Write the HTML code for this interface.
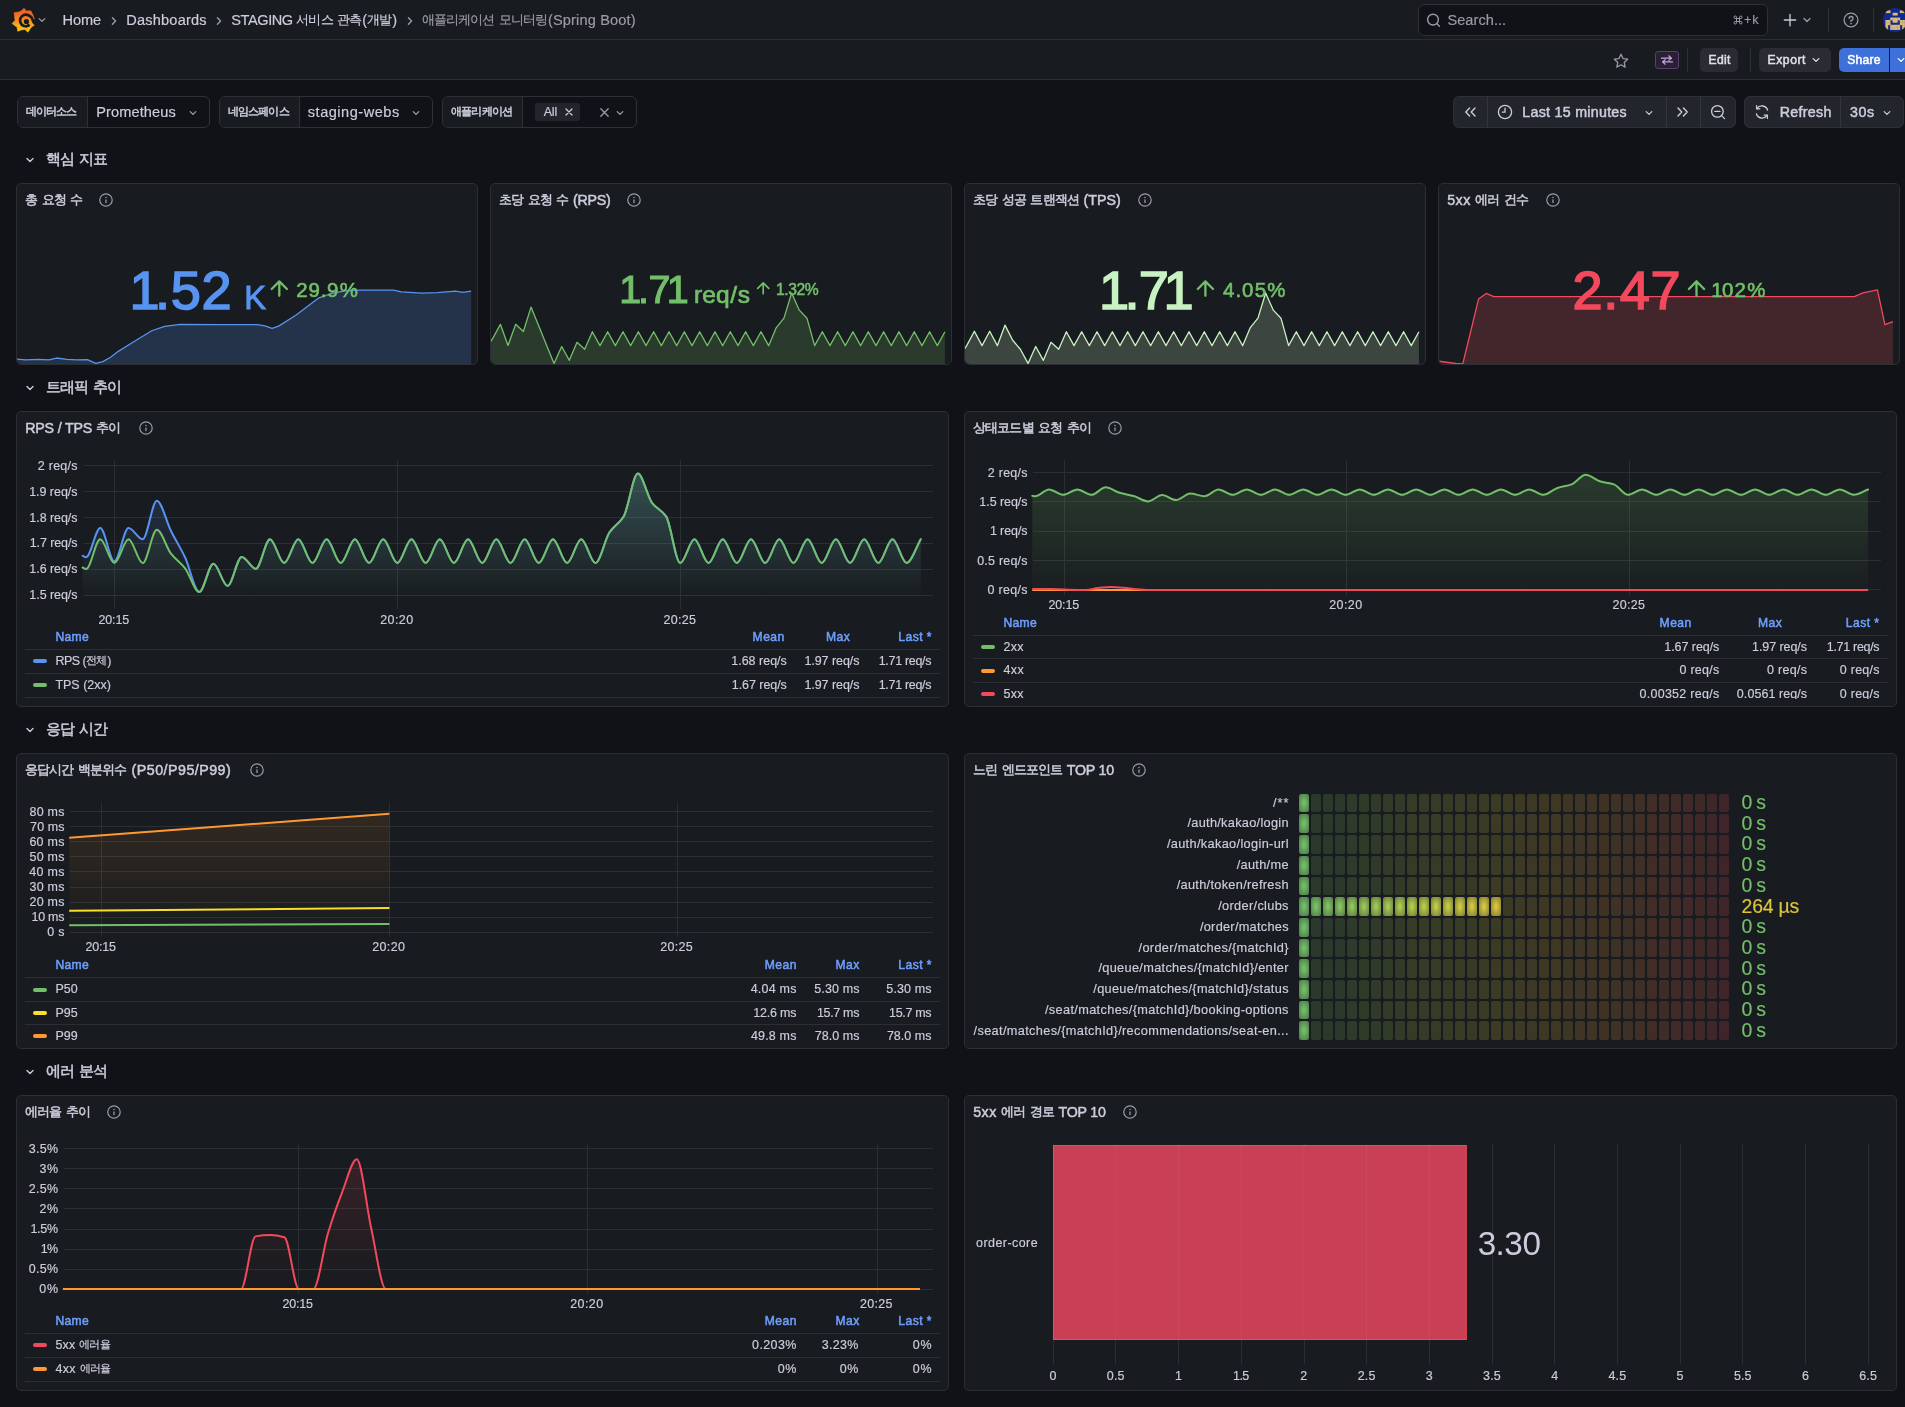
<!DOCTYPE html>
<html lang="ko"><head><meta charset="utf-8"><title>애플리케이션 모니터링(Spring Boot) - Grafana</title>
<style>
html,body{margin:0;padding:0;background:#111217;}
body{width:1905px;height:1407px;position:relative;overflow:hidden;will-change:transform;-webkit-font-smoothing:antialiased;font-family:"Liberation Sans",sans-serif;color:#ccccdc;}
.t{position:absolute;white-space:nowrap;line-height:1;margin:0;font-weight:400;font-family:"Liberation Sans",sans-serif;}
.panel{position:absolute;box-sizing:border-box;background:#181b1f;border:1px solid #2c2e34;border-radius:5px;}
svg{overflow:visible}
.bargauge i{position:absolute;display:block;width:10px;height:18.7px;border-radius:2px;}
</style></head><body>
<div style="position:absolute;left:0.00px;top:0.00px;width:1905.00px;height:39.00px;background:#181b1f;border-bottom:1px solid #2c2e34;"></div>
<div style="position:absolute;left:0.00px;top:40.00px;width:1905.00px;height:39.00px;background:#181b1f;border-bottom:1px solid #2c2e34;"></div>
<svg style="position:absolute;left:11.90px;top:7.80px;" width="23.00" height="25.00" viewBox="0 0 23.00 25.00"><defs><linearGradient id="lg" gradientUnits="userSpaceOnUse" x1="0" y1="24.4" x2="0" y2="0"><stop offset="0" stop-color="#fcd20b"/><stop offset="0.35" stop-color="#f9a11b"/><stop offset="0.75" stop-color="#f16a28"/><stop offset="1" stop-color="#f05a28"/></linearGradient></defs>
<path d="M12.0 0.1 L13.4 1.9 L14.6 2.9 L16.8 2.7 L19.2 3.0 L19.6 4.4 L20.3 5.6 L21.3 7.8 L22.2 10.4 L21.9 11.9 L20.8 12.2 L19.7 12.8 L20.0 14.2 L20.9 15.8 L22.3 17.4 L20.2 18.6 L18.3 20.6 L17.2 22.6 L15.7 24.3 L14.3 22.6 L12.7 21.5 L9.2 22.0 L5.8 23.3 L5.3 21.2 L5.1 19.3 L2.6 17.6 L0.0 15.5 L1.6 13.8 L3.0 12.4 L2.6 9.2 L2.0 4.5 L4.8 4.3 L7.3 3.8 L9.9 2.4Z" fill="url(#lg)" stroke="url(#lg)" stroke-width="0.5" stroke-linejoin="round"/>
<path d="M23.20 14.90C22.87 14.63 21.66 13.90 21.20 13.30C20.74 12.70 20.86 12.08 20.45 11.30C20.04 10.52 19.82 9.40 18.75 8.61C17.67 7.83 15.50 6.64 14.00 6.60C12.50 6.56 10.76 7.36 9.76 8.36C8.76 9.36 7.99 11.20 8.00 12.60C8.01 14.00 8.91 15.83 9.83 16.77C10.75 17.72 12.42 18.14 13.50 18.28C14.59 18.41 15.64 17.86 16.32 17.58C17.01 17.31 17.40 16.77 17.61 16.61" fill="none" stroke="#181b1f" stroke-width="2.7" stroke-linecap="butt"/>
<circle cx="14.4" cy="13.5" r="2.6" fill="#181b1f"/>
<path d="M14.6 15.6 L16.3 16.3" stroke="#181b1f" stroke-width="1.1" stroke-linecap="round"/></svg>
<svg style="position:absolute;left:36.00px;top:14.20px;" width="12.00" height="12.00" viewBox="0 0 12.00 12.00"><path d="M3.2 4.6 L6 7.4 L8.8 4.6" fill="none" stroke="#9a9ba6" stroke-width="1.3" stroke-linecap="round" stroke-linejoin="round"/></svg>
<span class="t" style="font-size:14.56px;color:#ccccdc;top:13.00px;letter-spacing:-0.125px;-webkit-text-stroke:0.18px;left:62.60px;">Home</span>
<svg style="position:absolute;left:107.80px;top:14.60px;" width="12.00" height="12.00" viewBox="0 0 12.00 12.00"><path d="M4.4 2.8 L7.6 6 L4.4 9.2" fill="none" stroke="#9a9ba6" stroke-width="1.4" stroke-linecap="round" stroke-linejoin="round"/></svg>
<span class="t" style="font-size:14.56px;color:#ccccdc;top:13.00px;letter-spacing:0.202px;-webkit-text-stroke:0.18px;left:126.30px;">Dashboards</span>
<svg style="position:absolute;left:212.80px;top:14.60px;" width="12.00" height="12.00" viewBox="0 0 12.00 12.00"><path d="M4.4 2.8 L7.6 6 L4.4 9.2" fill="none" stroke="#9a9ba6" stroke-width="1.4" stroke-linecap="round" stroke-linejoin="round"/></svg>
<span class="t" style="font-size:14.56px;color:#ccccdc;top:13.00px;-webkit-text-stroke:0.18px;left:231.30px;"><span style="letter-spacing:-0.418px">STAGING </span><span style="font-size:13.16px;letter-spacing:-0.910px;margin-right:0.73px;position:relative;top:-1.19px">서비스</span><span style="letter-spacing:-0.107px"> </span><span style="font-size:13.16px;letter-spacing:-0.910px;margin-right:0.73px;position:relative;top:-1.19px">관측</span><span style="letter-spacing:0.258px">(</span><span style="font-size:13.16px;letter-spacing:-0.910px;margin-right:0.73px;position:relative;top:-1.19px">개발</span><span style="letter-spacing:0.258px">)</span></span>
<svg style="position:absolute;left:403.70px;top:14.60px;" width="12.00" height="12.00" viewBox="0 0 12.00 12.00"><path d="M4.4 2.8 L7.6 6 L4.4 9.2" fill="none" stroke="#9a9ba6" stroke-width="1.4" stroke-linecap="round" stroke-linejoin="round"/></svg>
<span class="t" style="font-size:14.56px;color:#9a9ba6;top:13.00px;-webkit-text-stroke:0.18px;left:421.60px;"><span style="font-size:13.16px;letter-spacing:-0.910px;margin-right:0.73px;position:relative;top:-1.19px">애플리케이션</span><span style="letter-spacing:-0.107px"> </span><span style="font-size:13.16px;letter-spacing:-0.910px;margin-right:0.73px;position:relative;top:-1.19px">모니터링</span><span style="letter-spacing:0.169px">(Spring Boot)</span></span>
<div style="position:absolute;left:1418.00px;top:4.00px;width:350.00px;height:32.00px;box-sizing:border-box;background:#111217;border:1px solid #2e3036;border-radius:6px;"></div>
<svg style="position:absolute;left:1425.00px;top:12.00px;" width="16.00" height="16.00" viewBox="0 0 16.00 16.00"><circle cx="8" cy="7.6" r="5.4" fill="none" stroke="#9a9ba6" stroke-width="1.4"/><path d="M12 11.8 L14.4 14.2" stroke="#9a9ba6" stroke-width="1.4" stroke-linecap="round"/></svg>
<span class="t" style="font-size:14.56px;color:#9a9ba6;top:13.00px;letter-spacing:0.070px;-webkit-text-stroke:0.18px;left:1447.40px;">Search...</span>
<svg style="position:absolute;left:1733.20px;top:15.20px;" width="10.00" height="10.00" viewBox="0 0 10.00 10.00"><path d="M3.5 2.25 A1.25 1.25 0 1 0 2.25 3.5 M6.5 2.25 A1.25 1.25 0 1 1 7.75 3.5 M3.5 7.75 A1.25 1.25 0 1 1 2.25 6.5 M6.5 7.75 A1.25 1.25 0 1 0 7.75 6.5 M2.25 3.5 H7.75 M2.25 6.5 H7.75 M3.5 2.25 V7.75 M6.5 2.25 V7.75" fill="none" stroke="#9a9ba6" stroke-width="1"/></svg>
<span class="t" style="font-size:12.48px;color:#9a9ba6;top:14.00px;letter-spacing:1.035px;-webkit-text-stroke:0.18px;left:1744.00px;">+k</span>
<svg style="position:absolute;left:1783.00px;top:13.20px;" width="14.00" height="14.00" viewBox="0 0 14.00 14.00"><path d="M7 1.3 V12.7 M1.3 7 H12.7" stroke="#ccccdc" stroke-width="1.35" stroke-linecap="round"/></svg>
<svg style="position:absolute;left:1800.70px;top:14.40px;" width="12.00" height="12.00" viewBox="0 0 12.00 12.00"><path d="M3 4.5 L6 7.5 L9 4.5" fill="none" stroke="#9a9ba6" stroke-width="1.3" stroke-linecap="round" stroke-linejoin="round"/></svg>
<div style="position:absolute;left:1828.00px;top:8.00px;width:1.00px;height:24.00px;background:#2e3036;"></div>
<svg style="position:absolute;left:1842.80px;top:12.20px;" width="16.00" height="16.00" viewBox="0 0 16.00 16.00"><circle cx="8" cy="8" r="6.9" fill="none" stroke="#9a9ba6" stroke-width="1.3"/><path d="M6.1 6.4 A1.95 1.95 0 1 1 8 8.4 V9.4" fill="none" stroke="#9a9ba6" stroke-width="1.3" stroke-linecap="round"/><circle cx="8" cy="11.5" r="0.85" fill="#9a9ba6"/></svg>
<div style="position:absolute;left:1873.00px;top:8.00px;width:1.00px;height:24.00px;background:#2e3036;"></div>
<svg style="position:absolute;left:1882.85px;top:7.96px;" width="24.00" height="24.00" viewBox="0 0 24.00 24.00"><defs><clipPath id="avc"><circle cx="12" cy="12" r="12"/></clipPath></defs><g clip-path="url(#avc)"><rect width="24" height="24" fill="#10298e"/><rect x="2.4" y="2.4" width="2.7" height="2.7" fill="#dbb978"/><rect x="4.8" y="2.4" width="2.7" height="2.7" fill="#dbb978"/><rect x="16.8" y="2.4" width="2.7" height="2.7" fill="#dbb978"/><rect x="19.2" y="2.4" width="2.7" height="2.7" fill="#dbb978"/><rect x="9.6" y="4.8" width="2.7" height="2.7" fill="#dbb978"/><rect x="12.0" y="4.8" width="2.7" height="2.7" fill="#dbb978"/><rect x="7.2" y="9.6" width="2.7" height="2.7" fill="#dbb978"/><rect x="9.6" y="9.6" width="2.7" height="2.7" fill="#dbb978"/><rect x="12.0" y="9.6" width="2.7" height="2.7" fill="#dbb978"/><rect x="14.4" y="9.6" width="2.7" height="2.7" fill="#dbb978"/><rect x="2.4" y="12.0" width="2.7" height="2.7" fill="#dbb978"/><rect x="4.8" y="12.0" width="2.7" height="2.7" fill="#dbb978"/><rect x="9.6" y="12.0" width="2.7" height="2.7" fill="#dbb978"/><rect x="12.0" y="12.0" width="2.7" height="2.7" fill="#dbb978"/><rect x="16.8" y="12.0" width="2.7" height="2.7" fill="#dbb978"/><rect x="19.2" y="12.0" width="2.7" height="2.7" fill="#dbb978"/><rect x="2.4" y="14.4" width="2.7" height="2.7" fill="#dbb978"/><rect x="4.8" y="14.4" width="2.7" height="2.7" fill="#dbb978"/><rect x="16.8" y="14.4" width="2.7" height="2.7" fill="#dbb978"/><rect x="19.2" y="14.4" width="2.7" height="2.7" fill="#dbb978"/><rect x="2.4" y="16.8" width="2.7" height="2.7" fill="#dbb978"/><rect x="7.2" y="16.8" width="2.7" height="2.7" fill="#dbb978"/><rect x="9.6" y="16.8" width="2.7" height="2.7" fill="#dbb978"/><rect x="12.0" y="16.8" width="2.7" height="2.7" fill="#dbb978"/><rect x="14.4" y="16.8" width="2.7" height="2.7" fill="#dbb978"/><rect x="19.2" y="16.8" width="2.7" height="2.7" fill="#dbb978"/><rect x="2.4" y="19.2" width="2.7" height="2.7" fill="#dbb978"/><rect x="7.2" y="19.2" width="2.7" height="2.7" fill="#dbb978"/><rect x="9.6" y="19.2" width="2.7" height="2.7" fill="#dbb978"/><rect x="12.0" y="19.2" width="2.7" height="2.7" fill="#dbb978"/><rect x="14.4" y="19.2" width="2.7" height="2.7" fill="#dbb978"/><rect x="19.2" y="19.2" width="2.7" height="2.7" fill="#dbb978"/></g></svg>
<svg style="position:absolute;left:1613.00px;top:52.50px;" width="16.00" height="16.00" viewBox="0 0 16.00 16.00"><path d="M8 1.3 L10 5.6 L14.7 6.2 L11.2 9.4 L12.2 14.1 L8 11.8 L3.8 14.1 L4.8 9.4 L1.3 6.2 L6 5.6 Z" fill="none" stroke="#9a9ba6" stroke-width="1.3" stroke-linejoin="round"/></svg>
<div style="position:absolute;left:1654.80px;top:51.20px;width:24.40px;height:17.80px;box-sizing:border-box;background:#2a2033;border:1px solid #5b3f6e;border-radius:3px;"></div>
<svg style="position:absolute;left:1660.00px;top:55.00px;" width="14.00" height="10.00" viewBox="0 0 14.00 10.00"><path d="M1.5 3.2 H11.5 M8.8 0.8 L11.5 3.2 L8.8 5.4 M12.5 6.9 H2.5 M5.2 4.7 L2.5 6.9 L5.2 9.2" fill="none" stroke="#c6a4e3" stroke-width="1.2" stroke-linecap="round" stroke-linejoin="round"/></svg>
<div style="position:absolute;left:1687.20px;top:48.00px;width:1.00px;height:24.00px;background:#2e3036;"></div>
<div style="position:absolute;left:1700.00px;top:48.00px;width:38.00px;height:24.00px;background:#2b2c33;border-radius:5px;"></div>
<span class="t" style="font-size:12.11px;color:#e0e0ea;top:54.00px;letter-spacing:0.305px;-webkit-text-stroke:0.50px;left:1708.50px;">Edit</span>
<div style="position:absolute;left:1750.00px;top:48.00px;width:1.00px;height:24.00px;background:#2e3036;"></div>
<div style="position:absolute;left:1759.00px;top:48.00px;width:72.00px;height:24.00px;background:#2b2c33;border-radius:5px;"></div>
<span class="t" style="font-size:12.11px;color:#e0e0ea;top:54.00px;letter-spacing:0.562px;-webkit-text-stroke:0.50px;left:1767.60px;">Export</span>
<svg style="position:absolute;left:1810.00px;top:54.40px;" width="12.00" height="12.00" viewBox="0 0 12.00 12.00"><path d="M3.2 4.6 L6 7.4 L8.8 4.6" fill="none" stroke="#e0e0ea" stroke-width="1.3" stroke-linecap="round" stroke-linejoin="round"/></svg>
<div style="position:absolute;left:1839.00px;top:48.00px;width:50.00px;height:24.00px;background:#3d71d9;border-radius:5px 0 0 5px;"></div>
<span class="t" style="font-size:12.11px;color:#ffffff;top:54.00px;letter-spacing:0.193px;-webkit-text-stroke:0.50px;left:1847.30px;">Share</span>
<div style="position:absolute;left:1890.00px;top:48.00px;width:20.00px;height:24.00px;background:#3d71d9;"></div>
<svg style="position:absolute;left:1894.60px;top:54.40px;" width="12.00" height="12.00" viewBox="0 0 12.00 12.00"><path d="M3.2 4.6 L6 7.4 L8.8 4.6" fill="none" stroke="#ffffff" stroke-width="1.3" stroke-linecap="round" stroke-linejoin="round"/></svg>
<div style="position:absolute;left:17.00px;top:96.00px;width:193.00px;height:32.00px;box-sizing:border-box;background:#111217;border:1px solid #2e3036;border-radius:6px;"></div>
<div style="position:absolute;left:18.00px;top:97.00px;width:70.00px;height:30.00px;background:#181b1f;border-right:1px solid #2e3036;border-radius:5px 0 0 5px;box-sizing:border-box;"></div>
<span class="t" style="font-size:12.11px;color:#ccccdc;top:106.00px;-webkit-text-stroke:0.50px;left:25.50px;"><span style="font-size:11.28px;letter-spacing:-0.780px;margin-right:0.62px;position:relative;top:-1.02px">데이터소스</span></span>
<span class="t" style="font-size:14.56px;color:#ccccdc;top:105.00px;letter-spacing:0.125px;-webkit-text-stroke:0.18px;left:96.20px;">Prometheus</span>
<svg style="position:absolute;left:186.50px;top:106.60px;" width="12.00" height="12.00" viewBox="0 0 12.00 12.00"><path d="M3.2 4.6 L6 7.4 L8.8 4.6" fill="none" stroke="#9a9ba6" stroke-width="1.3" stroke-linecap="round" stroke-linejoin="round"/></svg>
<div style="position:absolute;left:219.00px;top:96.00px;width:214.00px;height:32.00px;box-sizing:border-box;background:#111217;border:1px solid #2e3036;border-radius:6px;"></div>
<div style="position:absolute;left:220.00px;top:97.00px;width:79.50px;height:30.00px;background:#181b1f;border-right:1px solid #2e3036;border-radius:5px 0 0 5px;box-sizing:border-box;"></div>
<span class="t" style="font-size:12.11px;color:#ccccdc;top:106.00px;-webkit-text-stroke:0.50px;left:227.50px;"><span style="font-size:11.28px;letter-spacing:-0.780px;margin-right:0.62px;position:relative;top:-1.02px">네임스페이스</span></span>
<span class="t" style="font-size:14.56px;color:#ccccdc;top:105.00px;letter-spacing:0.513px;-webkit-text-stroke:0.18px;left:307.80px;">staging-webs</span>
<svg style="position:absolute;left:410.00px;top:106.60px;" width="12.00" height="12.00" viewBox="0 0 12.00 12.00"><path d="M3.2 4.6 L6 7.4 L8.8 4.6" fill="none" stroke="#9a9ba6" stroke-width="1.3" stroke-linecap="round" stroke-linejoin="round"/></svg>
<div style="position:absolute;left:442.00px;top:96.00px;width:195.00px;height:32.00px;box-sizing:border-box;background:#111217;border:1px solid #2e3036;border-radius:6px;"></div>
<div style="position:absolute;left:443.00px;top:97.00px;width:79.50px;height:30.00px;background:#181b1f;border-right:1px solid #2e3036;border-radius:5px 0 0 5px;box-sizing:border-box;"></div>
<span class="t" style="font-size:12.11px;color:#ccccdc;top:106.00px;-webkit-text-stroke:0.50px;left:451.00px;"><span style="font-size:11.28px;letter-spacing:-0.780px;margin-right:0.62px;position:relative;top:-1.02px">애플리케이션</span></span>
<div style="position:absolute;left:534.80px;top:103.00px;width:45.20px;height:18.00px;background:#22252b;border-radius:3px;"></div>
<span class="t" style="font-size:12.48px;color:#ccccdc;top:106.00px;letter-spacing:-0.176px;-webkit-text-stroke:0.18px;left:543.70px;">All</span>
<svg style="position:absolute;left:565.00px;top:108.00px;" width="8.00" height="8.00" viewBox="0 0 8.00 8.00"><path d="M1 1 L7 7 M7 1 L1 7" stroke="#ccccdc" stroke-width="1.3" stroke-linecap="round"/></svg>
<svg style="position:absolute;left:599.50px;top:107.80px;" width="9.00" height="9.00" viewBox="0 0 9.00 9.00"><path d="M0.8 0.8 L8.2 8.2 M8.2 0.8 L0.8 8.2" stroke="#9a9ba6" stroke-width="1.3" stroke-linecap="round"/></svg>
<svg style="position:absolute;left:614.00px;top:106.60px;" width="12.00" height="12.00" viewBox="0 0 12.00 12.00"><path d="M3.2 4.6 L6 7.4 L8.8 4.6" fill="none" stroke="#9a9ba6" stroke-width="1.3" stroke-linecap="round" stroke-linejoin="round"/></svg>
<div style="position:absolute;left:1453.00px;top:96.00px;width:283.00px;height:32.00px;box-sizing:border-box;background:#22252b;border:1px solid #2e3036;border-radius:6px;"></div>
<div style="position:absolute;left:1487.00px;top:97.00px;width:1.00px;height:30.00px;background:#33353c;"></div>
<div style="position:absolute;left:1666.00px;top:97.00px;width:1.00px;height:30.00px;background:#33353c;"></div>
<div style="position:absolute;left:1700.00px;top:97.00px;width:1.00px;height:30.00px;background:#33353c;"></div>
<svg style="position:absolute;left:1464.00px;top:106.00px;" width="13.00" height="12.00" viewBox="0 0 13.00 12.00"><path d="M5.6 2 L1.8 6 L5.6 10 M11 2 L7.2 6 L11 10" fill="none" stroke="#ccccdc" stroke-width="1.4" stroke-linecap="round" stroke-linejoin="round"/></svg>
<svg style="position:absolute;left:1496.70px;top:104.00px;" width="16.00" height="16.00" viewBox="0 0 16.00 16.00"><circle cx="8" cy="8" r="6.6" fill="none" stroke="#ccccdc" stroke-width="1.3"/><path d="M8 4.2 V8.2 H5.4" fill="none" stroke="#ccccdc" stroke-width="1.3" stroke-linecap="round" stroke-linejoin="round"/></svg>
<span class="t" style="font-size:14.22px;color:#ccccdc;top:105.00px;letter-spacing:0.285px;-webkit-text-stroke:0.50px;left:1522.30px;">Last 15 minutes</span>
<svg style="position:absolute;left:1642.70px;top:106.60px;" width="12.00" height="12.00" viewBox="0 0 12.00 12.00"><path d="M3.2 4.6 L6 7.4 L8.8 4.6" fill="none" stroke="#ccccdc" stroke-width="1.3" stroke-linecap="round" stroke-linejoin="round"/></svg>
<svg style="position:absolute;left:1676.40px;top:106.00px;" width="13.00" height="12.00" viewBox="0 0 13.00 12.00"><path d="M2 2 L5.8 6 L2 10 M7.4 2 L11.2 6 L7.4 10" fill="none" stroke="#ccccdc" stroke-width="1.4" stroke-linecap="round" stroke-linejoin="round"/></svg>
<svg style="position:absolute;left:1709.50px;top:104.00px;" width="16.00" height="16.00" viewBox="0 0 16.00 16.00"><circle cx="7.4" cy="7.4" r="5.8" fill="none" stroke="#ccccdc" stroke-width="1.3"/><path d="M4.8 7.4 H10 M11.6 11.6 L14.6 14.6" stroke="#ccccdc" stroke-width="1.3" stroke-linecap="round"/></svg>
<div style="position:absolute;left:1744.00px;top:96.00px;width:160.00px;height:32.00px;box-sizing:border-box;background:#22252b;border:1px solid #2e3036;border-radius:6px;"></div>
<div style="position:absolute;left:1840.00px;top:97.00px;width:1.00px;height:30.00px;background:#33353c;"></div>
<svg style="position:absolute;left:1753.50px;top:104.40px;" width="16.00" height="16.00" viewBox="0 0 16.00 16.00"><path d="M13.6 6.2 A5.9 5.9 0 0 0 3 4.6 M2.4 9.8 A5.9 5.9 0 0 0 13 11.4" fill="none" stroke="#ccccdc" stroke-width="1.3" stroke-linecap="round"/><path d="M2.6 1.6 V4.8 H5.8 M13.4 14.4 V11.2 H10.2" fill="none" stroke="#ccccdc" stroke-width="1.3" stroke-linecap="round" stroke-linejoin="round"/></svg>
<span class="t" style="font-size:14.22px;color:#ccccdc;top:105.00px;letter-spacing:0.287px;-webkit-text-stroke:0.50px;left:1779.80px;">Refresh</span>
<span class="t" style="font-size:14.22px;color:#ccccdc;top:105.00px;letter-spacing:0.551px;-webkit-text-stroke:0.50px;left:1850.00px;">30s</span>
<svg style="position:absolute;left:1881.20px;top:106.60px;" width="12.00" height="12.00" viewBox="0 0 12.00 12.00"><path d="M3.2 4.6 L6 7.4 L8.8 4.6" fill="none" stroke="#ccccdc" stroke-width="1.3" stroke-linecap="round" stroke-linejoin="round"/></svg>
<svg style="position:absolute;left:23.80px;top:153.80px;" width="12.00" height="12.00" viewBox="0 0 12.00 12.00"><path d="M3 4.5 L6 7.5 L9 4.5" fill="none" stroke="#ccccdc" stroke-width="1.4" stroke-linecap="round" stroke-linejoin="round"/></svg>
<span class="t" style="font-size:16.34px;color:#ccccdc;top:151.00px;-webkit-text-stroke:0.50px;left:46.00px;"><span style="font-size:15.04px;letter-spacing:-1.040px;margin-right:0.83px;position:relative;top:-1.36px">핵심</span><span style="letter-spacing:-0.274px"> </span><span style="font-size:15.04px;letter-spacing:-1.040px;margin-right:0.83px;position:relative;top:-1.36px">지표</span></span>
<svg style="position:absolute;left:23.80px;top:381.80px;" width="12.00" height="12.00" viewBox="0 0 12.00 12.00"><path d="M3 4.5 L6 7.5 L9 4.5" fill="none" stroke="#ccccdc" stroke-width="1.4" stroke-linecap="round" stroke-linejoin="round"/></svg>
<span class="t" style="font-size:16.34px;color:#ccccdc;top:379.00px;-webkit-text-stroke:0.50px;left:46.00px;"><span style="font-size:15.04px;letter-spacing:-1.040px;margin-right:0.83px;position:relative;top:-1.36px">트래픽</span><span style="letter-spacing:-0.274px"> </span><span style="font-size:15.04px;letter-spacing:-1.040px;margin-right:0.83px;position:relative;top:-1.36px">추이</span></span>
<svg style="position:absolute;left:23.80px;top:723.80px;" width="12.00" height="12.00" viewBox="0 0 12.00 12.00"><path d="M3 4.5 L6 7.5 L9 4.5" fill="none" stroke="#ccccdc" stroke-width="1.4" stroke-linecap="round" stroke-linejoin="round"/></svg>
<span class="t" style="font-size:16.34px;color:#ccccdc;top:721.00px;-webkit-text-stroke:0.50px;left:46.00px;"><span style="font-size:15.04px;letter-spacing:-1.040px;margin-right:0.83px;position:relative;top:-1.36px">응답</span><span style="letter-spacing:-0.274px"> </span><span style="font-size:15.04px;letter-spacing:-1.040px;margin-right:0.83px;position:relative;top:-1.36px">시간</span></span>
<svg style="position:absolute;left:23.80px;top:1065.80px;" width="12.00" height="12.00" viewBox="0 0 12.00 12.00"><path d="M3 4.5 L6 7.5 L9 4.5" fill="none" stroke="#ccccdc" stroke-width="1.4" stroke-linecap="round" stroke-linejoin="round"/></svg>
<span class="t" style="font-size:16.34px;color:#ccccdc;top:1063.00px;-webkit-text-stroke:0.50px;left:46.00px;"><span style="font-size:15.04px;letter-spacing:-1.040px;margin-right:0.83px;position:relative;top:-1.36px">에러</span><span style="letter-spacing:-0.274px"> </span><span style="font-size:15.04px;letter-spacing:-1.040px;margin-right:0.83px;position:relative;top:-1.36px">분석</span></span>
<div class="panel" style="left:16px;top:183px;width:462px;height:182px;"></div>
<h2 class="t" style="font-size:14.22px;color:#ccccdc;top:193.00px;-webkit-text-stroke:0.50px;left:25.20px;"><span style="font-size:13.16px;letter-spacing:-0.910px;margin-right:0.73px;position:relative;top:-1.19px">총</span><span style="letter-spacing:-0.219px"> </span><span style="font-size:13.16px;letter-spacing:-0.910px;margin-right:0.73px;position:relative;top:-1.19px">요청</span><span style="letter-spacing:-0.219px"> </span><span style="font-size:13.16px;letter-spacing:-0.910px;margin-right:0.73px;position:relative;top:-1.19px">수</span></h2>
<svg style="position:absolute;left:97.90px;top:192.00px;" width="16.00" height="16.00" viewBox="0 0 16.00 16.00"><circle cx="8" cy="8" r="6.2" fill="none" stroke="#9a9ba6" stroke-width="1.2"/><path d="M8 7.9 V10.6" stroke="#9a9ba6" stroke-width="1.3" stroke-linecap="round"/><circle cx="8" cy="5.5" r="0.8" fill="#9a9ba6"/></svg>
<svg style="position:absolute;left:0.00px;top:0.00px;pointer-events:none;" width="1905.00" height="1407.00" viewBox="0 0 1905.00 1407.00"><defs><clipPath id="c16"><rect x="17" y="184" width="460" height="180" rx="5"/></clipPath></defs><g clip-path="url(#c16)"><path d="M4.12 360.33L15.43 359.04L25.72 359.81L38.58 359.30L48.87 359.81L56.58 358.01L66.87 359.30L77.16 359.81L87.45 359.56L95.68 363.42L102.88 361.62L110.60 357.24L118.31 351.33L133.74 341.81L151.75 330.75L164.61 326.38L180.04 324.32L218.62 324.58L257.20 324.58L264.92 325.86L272.12 328.44L279.06 325.86L295.78 315.32L318.93 297.83L331.79 293.46L344.65 290.88L360.08 290.11L393.52 290.11L401.23 291.91L421.81 293.20L437.24 292.69L455.25 291.14L462.96 292.43L471.19 291.14L471.19 364 L4.12 364Z" fill="#243349"/><path d="M4.12 360.33L15.43 359.04L25.72 359.81L38.58 359.30L48.87 359.81L56.58 358.01L66.87 359.30L77.16 359.81L87.45 359.56L95.68 363.42L102.88 361.62L110.60 357.24L118.31 351.33L133.74 341.81L151.75 330.75L164.61 326.38L180.04 324.32L218.62 324.58L257.20 324.58L264.92 325.86L272.12 328.44L279.06 325.86L295.78 315.32L318.93 297.83L331.79 293.46L344.65 290.88L360.08 290.11L393.52 290.11L401.23 291.91L421.81 293.20L437.24 292.69L455.25 291.14L462.96 292.43L471.19 291.14" fill="none" stroke="#5794f2" stroke-width="1.3" stroke-linejoin="round"/></g></svg>
<span class="t" style="font-size:54.19px;color:#5794f2;top:263.00px;left:129.39px;-webkit-text-stroke:1.59px;"><span style="letter-spacing:-4.59px">1</span><span style="letter-spacing:0.65px">.</span><span style="letter-spacing:0.80px">5</span><span style="letter-spacing:0.00px">2</span></span>
<span class="t" style="font-size:32.72px;color:#5794f2;top:282.00px;-webkit-text-stroke:0.96px;left:244.30px;">K</span>
<svg style="position:absolute;left:0.00px;top:0.00px;pointer-events:none;" width="1905.00" height="1407.00" viewBox="0 0 1905.00 1407.00"><path d="M279.30 295.85 V281.35 M271.70 288.95 L279.30 281.35 L286.90 288.95" fill="none" stroke="#73bf69" stroke-width="2.3" stroke-linecap="round" stroke-linejoin="round"/></svg>
<span class="t" style="font-size:20.45px;color:#73bf69;top:280.00px;left:296.23px;-webkit-text-stroke:0.60px;"><span style="letter-spacing:1.00px">2</span><span style="letter-spacing:0.71px">9</span><span style="letter-spacing:0.75px">.</span><span style="letter-spacing:1.32px">9</span><span style="letter-spacing:0.00px">%</span></span>
<div class="panel" style="left:490px;top:183px;width:462px;height:182px;"></div>
<h2 class="t" style="font-size:14.22px;color:#ccccdc;top:193.00px;-webkit-text-stroke:0.50px;left:499.20px;"><span style="font-size:13.16px;letter-spacing:-0.910px;margin-right:0.73px;position:relative;top:-1.19px">초당</span><span style="letter-spacing:-0.219px"> </span><span style="font-size:13.16px;letter-spacing:-0.910px;margin-right:0.73px;position:relative;top:-1.19px">요청</span><span style="letter-spacing:-0.219px"> </span><span style="font-size:13.16px;letter-spacing:-0.910px;margin-right:0.73px;position:relative;top:-1.19px">수</span><span style="letter-spacing:-0.253px"> (RPS)</span></h2>
<svg style="position:absolute;left:626.00px;top:192.00px;" width="16.00" height="16.00" viewBox="0 0 16.00 16.00"><circle cx="8" cy="8" r="6.2" fill="none" stroke="#9a9ba6" stroke-width="1.2"/><path d="M8 7.9 V10.6" stroke="#9a9ba6" stroke-width="1.3" stroke-linecap="round"/><circle cx="8" cy="5.5" r="0.8" fill="#9a9ba6"/></svg>
<svg style="position:absolute;left:0.00px;top:0.00px;pointer-events:none;" width="1905.00" height="1407.00" viewBox="0 0 1905.00 1407.00"><defs><clipPath id="c490"><rect x="491" y="184" width="460" height="180" rx="5"/></clipPath></defs><g clip-path="url(#c490)"><path d="M490.50 341.81L492.70 338.47L500.37 324.32L508.03 345.41L515.69 324.32L523.36 331.52L531.02 307.09L538.69 325.86L546.36 344.64L554.02 363.42L561.68 346.44L569.35 360.33L577.01 342.33L584.68 349.27L592.35 331.69L600.01 345.67L607.67 331.69L615.34 345.67L623.00 331.69L630.67 345.67L638.34 331.69L646.00 345.67L653.66 331.69L661.33 345.67L669.00 331.69L676.66 345.67L684.33 331.69L691.99 345.67L699.65 331.69L707.32 345.67L714.99 331.69L722.65 345.67L730.32 331.69L737.98 345.67L745.64 331.69L753.31 345.67L760.97 331.69L768.64 345.67L776.31 327.56L783.97 318.18L791.63 292.94L799.30 310.16L806.96 318.18L814.63 345.67L822.30 331.69L829.96 345.67L837.62 331.69L845.29 345.67L852.95 331.69L860.62 345.67L868.28 331.69L875.95 345.67L883.62 331.69L891.28 345.67L898.94 331.69L906.61 345.67L914.27 331.69L921.94 345.67L929.61 331.69L937.27 345.67L944.93 331.69L944.93 364 L490.50 364Z" fill="#2a3b2e"/><path d="M490.50 341.81L492.70 338.47L500.37 324.32L508.03 345.41L515.69 324.32L523.36 331.52L531.02 307.09L538.69 325.86L546.36 344.64L554.02 363.42L561.68 346.44L569.35 360.33L577.01 342.33L584.68 349.27L592.35 331.69L600.01 345.67L607.67 331.69L615.34 345.67L623.00 331.69L630.67 345.67L638.34 331.69L646.00 345.67L653.66 331.69L661.33 345.67L669.00 331.69L676.66 345.67L684.33 331.69L691.99 345.67L699.65 331.69L707.32 345.67L714.99 331.69L722.65 345.67L730.32 331.69L737.98 345.67L745.64 331.69L753.31 345.67L760.97 331.69L768.64 345.67L776.31 327.56L783.97 318.18L791.63 292.94L799.30 310.16L806.96 318.18L814.63 345.67L822.30 331.69L829.96 345.67L837.62 331.69L845.29 345.67L852.95 331.69L860.62 345.67L868.28 331.69L875.95 345.67L883.62 331.69L891.28 345.67L898.94 331.69L906.61 345.67L914.27 331.69L921.94 345.67L929.61 331.69L937.27 345.67L944.93 331.69" fill="none" stroke="#73bf69" stroke-width="1.3" stroke-linejoin="round"/></g></svg>
<span class="t" style="font-size:39.47px;color:#73bf69;top:270.00px;left:619.19px;-webkit-text-stroke:1.16px;"><span style="letter-spacing:-3.25px">1</span><span style="letter-spacing:-0.33px">.</span><span style="letter-spacing:-3.75px">7</span><span style="letter-spacing:0.00px">1</span></span>
<span class="t" style="font-size:24.54px;color:#73bf69;top:283.00px;left:694.11px;-webkit-text-stroke:0.72px;"><span style="letter-spacing:0.04px">r</span><span style="letter-spacing:-0.09px">e</span><span style="letter-spacing:0.78px">q</span><span style="letter-spacing:0.67px">/</span><span style="letter-spacing:0.00px">s</span></span>
<svg style="position:absolute;left:0.00px;top:0.00px;pointer-events:none;" width="1905.00" height="1407.00" viewBox="0 0 1905.00 1407.00"><path d="M763.20 293.75 V282.95 M757.70 288.45 L763.20 282.95 L768.70 288.45" fill="none" stroke="#73bf69" stroke-width="1.7" stroke-linecap="round" stroke-linejoin="round"/></svg>
<span class="t" style="font-size:15.70px;color:#73bf69;top:282.00px;letter-spacing:-0.454px;-webkit-text-stroke:0.50px;left:776.10px;">1.32%</span>
<div class="panel" style="left:964px;top:183px;width:462px;height:182px;"></div>
<h2 class="t" style="font-size:14.22px;color:#ccccdc;top:193.00px;-webkit-text-stroke:0.50px;left:973.20px;"><span style="font-size:13.16px;letter-spacing:-0.910px;margin-right:0.73px;position:relative;top:-1.19px">초당</span><span style="letter-spacing:-0.219px"> </span><span style="font-size:13.16px;letter-spacing:-0.910px;margin-right:0.73px;position:relative;top:-1.19px">성공</span><span style="letter-spacing:-0.219px"> </span><span style="font-size:13.16px;letter-spacing:-0.910px;margin-right:0.73px;position:relative;top:-1.19px">트랜잭션</span><span style="letter-spacing:0.022px"> (TPS)</span></h2>
<svg style="position:absolute;left:1137.00px;top:192.00px;" width="16.00" height="16.00" viewBox="0 0 16.00 16.00"><circle cx="8" cy="8" r="6.2" fill="none" stroke="#9a9ba6" stroke-width="1.2"/><path d="M8 7.9 V10.6" stroke="#9a9ba6" stroke-width="1.3" stroke-linecap="round"/><circle cx="8" cy="5.5" r="0.8" fill="#9a9ba6"/></svg>
<svg style="position:absolute;left:0.00px;top:0.00px;pointer-events:none;" width="1905.00" height="1407.00" viewBox="0 0 1905.00 1407.00"><defs><clipPath id="c964"><rect x="965" y="184" width="460" height="180" rx="5"/></clipPath></defs><g clip-path="url(#c964)"><path d="M964.50 348.76L966.70 345.67L974.37 331.27L982.03 345.67L989.70 331.27L997.36 345.67L1005.03 325.09L1012.69 340.27L1020.36 349.27L1028.02 363.42L1035.68 346.44L1043.35 360.33L1051.02 342.33L1058.68 349.27L1066.35 331.69L1074.01 345.67L1081.67 331.69L1089.34 345.67L1097.01 331.69L1104.67 345.67L1112.34 331.69L1120.00 345.67L1127.66 331.69L1135.33 345.67L1143.00 331.69L1150.66 345.67L1158.33 331.69L1165.99 345.67L1173.65 331.69L1181.32 345.67L1188.99 331.69L1196.65 345.67L1204.32 331.69L1211.98 345.67L1219.64 331.69L1227.31 345.67L1234.97 331.69L1242.64 345.67L1250.31 327.56L1257.97 318.18L1265.63 292.94L1273.30 310.16L1280.97 318.18L1288.63 345.67L1296.30 331.69L1303.96 345.67L1311.62 331.69L1319.29 345.67L1326.95 331.69L1334.62 345.67L1342.29 331.69L1349.95 345.67L1357.62 331.69L1365.28 345.67L1372.95 331.69L1380.61 345.67L1388.28 331.69L1395.94 345.67L1403.61 331.69L1411.27 345.67L1418.93 331.69L1418.93 364 L964.50 364Z" fill="#3c4540"/><path d="M964.50 348.76L966.70 345.67L974.37 331.27L982.03 345.67L989.70 331.27L997.36 345.67L1005.03 325.09L1012.69 340.27L1020.36 349.27L1028.02 363.42L1035.68 346.44L1043.35 360.33L1051.02 342.33L1058.68 349.27L1066.35 331.69L1074.01 345.67L1081.67 331.69L1089.34 345.67L1097.01 331.69L1104.67 345.67L1112.34 331.69L1120.00 345.67L1127.66 331.69L1135.33 345.67L1143.00 331.69L1150.66 345.67L1158.33 331.69L1165.99 345.67L1173.65 331.69L1181.32 345.67L1188.99 331.69L1196.65 345.67L1204.32 331.69L1211.98 345.67L1219.64 331.69L1227.31 345.67L1234.97 331.69L1242.64 345.67L1250.31 327.56L1257.97 318.18L1265.63 292.94L1273.30 310.16L1280.97 318.18L1288.63 345.67L1296.30 331.69L1303.96 345.67L1311.62 331.69L1319.29 345.67L1326.95 331.69L1334.62 345.67L1342.29 331.69L1349.95 345.67L1357.62 331.69L1365.28 345.67L1372.95 331.69L1380.61 345.67L1388.28 331.69L1395.94 345.67L1403.61 331.69L1411.27 345.67L1418.93 331.69" fill="none" stroke="#c8f2c2" stroke-width="1.3" stroke-linejoin="round"/></g></svg>
<span class="t" style="font-size:54.19px;color:#c8f2c2;top:263.00px;left:1099.12px;-webkit-text-stroke:1.59px;"><span style="letter-spacing:-4.72px">1</span><span style="letter-spacing:-0.76px">.</span><span style="letter-spacing:-5.49px">7</span><span style="letter-spacing:0.00px">1</span></span>
<svg style="position:absolute;left:0.00px;top:0.00px;pointer-events:none;" width="1905.00" height="1407.00" viewBox="0 0 1905.00 1407.00"><path d="M1205.40 295.85 V281.35 M1197.80 288.95 L1205.40 281.35 L1213.00 288.95" fill="none" stroke="#73bf69" stroke-width="2.3" stroke-linecap="round" stroke-linejoin="round"/></svg>
<span class="t" style="font-size:20.45px;color:#73bf69;top:280.00px;left:1222.96px;-webkit-text-stroke:0.60px;"><span style="letter-spacing:1.05px">4</span><span style="letter-spacing:0.96px">.</span><span style="letter-spacing:1.27px">0</span><span style="letter-spacing:1.29px">5</span><span style="letter-spacing:0.00px">%</span></span>
<div class="panel" style="left:1438px;top:183px;width:462px;height:182px;"></div>
<h2 class="t" style="font-size:14.22px;color:#ccccdc;top:193.00px;-webkit-text-stroke:0.50px;left:1447.20px;"><span style="letter-spacing:0.476px">5xx </span><span style="font-size:13.16px;letter-spacing:-0.910px;margin-right:0.73px;position:relative;top:-1.19px">에러</span><span style="letter-spacing:-0.219px"> </span><span style="font-size:13.16px;letter-spacing:-0.910px;margin-right:0.73px;position:relative;top:-1.19px">건수</span></h2>
<svg style="position:absolute;left:1545.00px;top:192.00px;" width="16.00" height="16.00" viewBox="0 0 16.00 16.00"><circle cx="8" cy="8" r="6.2" fill="none" stroke="#9a9ba6" stroke-width="1.2"/><path d="M8 7.9 V10.6" stroke="#9a9ba6" stroke-width="1.3" stroke-linecap="round"/><circle cx="8" cy="5.5" r="0.8" fill="#9a9ba6"/></svg>
<svg style="position:absolute;left:0.00px;top:0.00px;pointer-events:none;" width="1905.00" height="1407.00" viewBox="0 0 1905.00 1407.00"><defs><clipPath id="c1438"><rect x="1439" y="184" width="460" height="180" rx="5"/></clipPath></defs><g clip-path="url(#c1438)"><path d="M1438.33 361.19L1455.64 363.48L1462.77 363.99L1478.55 299.07L1486.19 293.47L1493.83 296.53L1854.32 296.53L1862.97 292.96L1877.48 289.91L1884.87 324.53L1893.01 321.73L1893.01 364 L1438.33 364Z" fill="#43252c"/><path d="M1438.33 361.19L1455.64 363.48L1462.77 363.99L1478.55 299.07L1486.19 293.47L1493.83 296.53L1854.32 296.53L1862.97 292.96L1877.48 289.91L1884.87 324.53L1893.01 321.73" fill="none" stroke="#f2495c" stroke-width="1.3" stroke-linejoin="round"/></g></svg>
<span class="t" style="font-size:54.19px;color:#f2495c;top:263.00px;left:1572.57px;-webkit-text-stroke:1.59px;"><span style="letter-spacing:0.43px">2</span><span style="letter-spacing:1.46px">.</span><span style="letter-spacing:0.62px">4</span><span style="letter-spacing:0.00px">7</span></span>
<svg style="position:absolute;left:0.00px;top:0.00px;pointer-events:none;" width="1905.00" height="1407.00" viewBox="0 0 1905.00 1407.00"><path d="M1696.50 295.85 V281.35 M1688.90 288.95 L1696.50 281.35 L1704.10 288.95" fill="none" stroke="#73bf69" stroke-width="2.3" stroke-linecap="round" stroke-linejoin="round"/></svg>
<span class="t" style="font-size:20.45px;color:#73bf69;top:280.00px;left:1711.27px;-webkit-text-stroke:0.60px;"><span style="letter-spacing:-0.77px">1</span><span style="letter-spacing:1.24px">0</span><span style="letter-spacing:1.33px">2</span><span style="letter-spacing:0.00px">%</span></span>
<div class="panel" style="left:16px;top:411px;width:933px;height:296px;"></div>
<h2 class="t" style="font-size:14.22px;color:#ccccdc;top:421.00px;-webkit-text-stroke:0.50px;left:25.20px;"><span style="letter-spacing:-0.182px">RPS / TPS </span><span style="font-size:13.16px;letter-spacing:-0.910px;margin-right:0.73px;position:relative;top:-1.19px">추이</span></h2>
<svg style="position:absolute;left:137.50px;top:420.00px;" width="16.00" height="16.00" viewBox="0 0 16.00 16.00"><circle cx="8" cy="8" r="6.2" fill="none" stroke="#9a9ba6" stroke-width="1.2"/><path d="M8 7.9 V10.6" stroke="#9a9ba6" stroke-width="1.3" stroke-linecap="round"/><circle cx="8" cy="5.5" r="0.8" fill="#9a9ba6"/></svg>
<svg style="position:absolute;left:0.00px;top:0.00px;pointer-events:none;" width="1905.00" height="1407.00" viewBox="0 0 1905.00 1407.00"><defs><linearGradient id="gb" gradientUnits="userSpaceOnUse" x1="0" y1="460" x2="0" y2="600"><stop offset="0" stop-color="#5794f2" stop-opacity="0.22"/><stop offset="1" stop-color="#5794f2" stop-opacity="0"/></linearGradient>
<linearGradient id="gg" gradientUnits="userSpaceOnUse" x1="0" y1="460" x2="0" y2="600"><stop offset="0" stop-color="#73bf69" stop-opacity="0.22"/><stop offset="1" stop-color="#73bf69" stop-opacity="0"/></linearGradient></defs><path d="M83.5 465.5 H933.0" stroke="#2b2f33" stroke-width="1"/><path d="M83.5 491.5 H933.0" stroke="#2b2f33" stroke-width="1"/><path d="M83.5 517.5 H933.0" stroke="#2b2f33" stroke-width="1"/><path d="M83.5 543.5 H933.0" stroke="#2b2f33" stroke-width="1"/><path d="M83.5 569.5 H933.0" stroke="#2b2f33" stroke-width="1"/><path d="M83.5 595.5 H933.0" stroke="#2b2f33" stroke-width="1"/><path d="M114.5 460.5 V609.0" stroke="#2b2f33" stroke-width="1"/><path d="M397.5 460.5 V609.0" stroke="#2b2f33" stroke-width="1"/><path d="M680.5 460.5 V609.0" stroke="#2b2f33" stroke-width="1"/><path d="M82.60 555.70C83.77 556.20 84.93 557.20 86.10 557.20C90.82 557.20 95.53 528.00 100.25 528.00C104.96 528.00 109.68 561.30 114.39 561.30C119.11 561.30 123.83 528.00 128.54 528.00C133.26 528.00 137.97 539.30 142.69 539.30C147.40 539.30 152.12 500.80 156.83 500.80C161.55 500.80 166.27 521.59 170.98 531.00C175.70 540.41 180.41 547.51 185.13 557.50C189.84 567.49 194.56 592.00 199.28 592.00C203.99 592.00 208.71 563.80 213.42 563.80C218.14 563.80 222.85 585.90 227.57 585.90C232.29 585.90 237.00 557.00 241.72 557.00C246.43 557.00 251.15 568.80 255.86 568.80C260.58 568.80 265.30 539.30 270.01 539.30C274.73 539.30 279.44 563.00 284.16 563.00C288.87 563.00 293.59 539.30 298.31 539.30C303.02 539.30 307.74 563.00 312.45 563.00C317.17 563.00 321.88 539.30 326.60 539.30C331.31 539.30 336.03 563.00 340.75 563.00C345.46 563.00 350.18 539.30 354.89 539.30C359.61 539.30 364.32 563.00 369.04 563.00C373.76 563.00 378.47 539.30 383.19 539.30C387.90 539.30 392.62 563.00 397.33 563.00C402.05 563.00 406.77 539.30 411.48 539.30C416.20 539.30 420.91 563.00 425.63 563.00C430.34 563.00 435.06 539.30 439.77 539.30C444.49 539.30 449.21 563.00 453.92 563.00C458.64 563.00 463.35 539.30 468.07 539.30C472.78 539.30 477.50 563.00 482.22 563.00C486.93 563.00 491.65 539.30 496.36 539.30C501.08 539.30 505.79 563.00 510.51 563.00C515.23 563.00 519.94 539.30 524.66 539.30C529.37 539.30 534.09 563.00 538.80 563.00C543.52 563.00 548.24 539.30 552.95 539.30C557.67 539.30 562.38 563.00 567.10 563.00C571.81 563.00 576.53 539.30 581.25 539.30C585.96 539.30 590.68 563.00 595.39 563.00C600.11 563.00 604.82 539.28 609.54 532.30C614.25 525.32 618.97 524.13 623.69 516.40C628.40 508.67 633.12 473.60 637.83 473.60C642.55 473.60 647.26 496.61 651.98 502.80C656.70 508.99 661.41 509.38 666.13 516.40C670.84 523.42 675.56 563.00 680.27 563.00C684.99 563.00 689.71 539.30 694.42 539.30C699.14 539.30 703.85 563.00 708.57 563.00C713.28 563.00 718.00 539.30 722.72 539.30C727.43 539.30 732.15 563.00 736.86 563.00C741.58 563.00 746.29 539.30 751.01 539.30C755.72 539.30 760.44 563.00 765.16 563.00C769.87 563.00 774.59 539.30 779.30 539.30C784.02 539.30 788.73 563.00 793.45 563.00C798.17 563.00 802.88 539.30 807.60 539.30C812.31 539.30 817.03 563.00 821.74 563.00C826.46 563.00 831.18 539.30 835.89 539.30C840.61 539.30 845.32 563.00 850.04 563.00C854.75 563.00 859.47 539.30 864.19 539.30C868.90 539.30 873.62 563.00 878.33 563.00C883.05 563.00 887.76 539.30 892.48 539.30C897.19 539.30 901.91 563.00 906.63 563.00C911.34 563.00 916.06 547.20 920.77 539.30L920.77 600 L82.60 600Z" fill="url(#gb)"/><path d="M82.60 567.50C83.77 568.03 84.93 569.10 86.10 569.10C90.82 569.10 95.53 539.30 100.25 539.30C104.96 539.30 109.68 563.00 114.39 563.00C119.11 563.00 123.83 539.30 128.54 539.30C133.26 539.30 137.97 563.00 142.69 563.00C147.40 563.00 152.12 529.80 156.83 529.80C161.55 529.80 166.27 547.66 170.98 553.70C175.70 559.74 180.41 562.28 185.13 568.30C189.84 574.32 194.56 592.00 199.28 592.00C203.99 592.00 208.71 563.80 213.42 563.80C218.14 563.80 222.85 585.90 227.57 585.90C232.29 585.90 237.00 557.00 241.72 557.00C246.43 557.00 251.15 568.80 255.86 568.80C260.58 568.80 265.30 539.30 270.01 539.30C274.73 539.30 279.44 563.00 284.16 563.00C288.87 563.00 293.59 539.30 298.31 539.30C303.02 539.30 307.74 563.00 312.45 563.00C317.17 563.00 321.88 539.30 326.60 539.30C331.31 539.30 336.03 563.00 340.75 563.00C345.46 563.00 350.18 539.30 354.89 539.30C359.61 539.30 364.32 563.00 369.04 563.00C373.76 563.00 378.47 539.30 383.19 539.30C387.90 539.30 392.62 563.00 397.33 563.00C402.05 563.00 406.77 539.30 411.48 539.30C416.20 539.30 420.91 563.00 425.63 563.00C430.34 563.00 435.06 539.30 439.77 539.30C444.49 539.30 449.21 563.00 453.92 563.00C458.64 563.00 463.35 539.30 468.07 539.30C472.78 539.30 477.50 563.00 482.22 563.00C486.93 563.00 491.65 539.30 496.36 539.30C501.08 539.30 505.79 563.00 510.51 563.00C515.23 563.00 519.94 539.30 524.66 539.30C529.37 539.30 534.09 563.00 538.80 563.00C543.52 563.00 548.24 539.30 552.95 539.30C557.67 539.30 562.38 563.00 567.10 563.00C571.81 563.00 576.53 539.30 581.25 539.30C585.96 539.30 590.68 563.00 595.39 563.00C600.11 563.00 604.82 539.28 609.54 532.30C614.25 525.32 618.97 524.13 623.69 516.40C628.40 508.67 633.12 473.60 637.83 473.60C642.55 473.60 647.26 496.61 651.98 502.80C656.70 508.99 661.41 509.38 666.13 516.40C670.84 523.42 675.56 563.00 680.27 563.00C684.99 563.00 689.71 539.30 694.42 539.30C699.14 539.30 703.85 563.00 708.57 563.00C713.28 563.00 718.00 539.30 722.72 539.30C727.43 539.30 732.15 563.00 736.86 563.00C741.58 563.00 746.29 539.30 751.01 539.30C755.72 539.30 760.44 563.00 765.16 563.00C769.87 563.00 774.59 539.30 779.30 539.30C784.02 539.30 788.73 563.00 793.45 563.00C798.17 563.00 802.88 539.30 807.60 539.30C812.31 539.30 817.03 563.00 821.74 563.00C826.46 563.00 831.18 539.30 835.89 539.30C840.61 539.30 845.32 563.00 850.04 563.00C854.75 563.00 859.47 539.30 864.19 539.30C868.90 539.30 873.62 563.00 878.33 563.00C883.05 563.00 887.76 539.30 892.48 539.30C897.19 539.30 901.91 563.00 906.63 563.00C911.34 563.00 916.06 547.20 920.77 539.30L920.77 600 L82.60 600Z" fill="url(#gg)"/><path d="M82.60 555.70C83.77 556.20 84.93 557.20 86.10 557.20C90.82 557.20 95.53 528.00 100.25 528.00C104.96 528.00 109.68 561.30 114.39 561.30C119.11 561.30 123.83 528.00 128.54 528.00C133.26 528.00 137.97 539.30 142.69 539.30C147.40 539.30 152.12 500.80 156.83 500.80C161.55 500.80 166.27 521.59 170.98 531.00C175.70 540.41 180.41 547.51 185.13 557.50C189.84 567.49 194.56 592.00 199.28 592.00C203.99 592.00 208.71 563.80 213.42 563.80C218.14 563.80 222.85 585.90 227.57 585.90C232.29 585.90 237.00 557.00 241.72 557.00C246.43 557.00 251.15 568.80 255.86 568.80C260.58 568.80 265.30 539.30 270.01 539.30C274.73 539.30 279.44 563.00 284.16 563.00C288.87 563.00 293.59 539.30 298.31 539.30C303.02 539.30 307.74 563.00 312.45 563.00C317.17 563.00 321.88 539.30 326.60 539.30C331.31 539.30 336.03 563.00 340.75 563.00C345.46 563.00 350.18 539.30 354.89 539.30C359.61 539.30 364.32 563.00 369.04 563.00C373.76 563.00 378.47 539.30 383.19 539.30C387.90 539.30 392.62 563.00 397.33 563.00C402.05 563.00 406.77 539.30 411.48 539.30C416.20 539.30 420.91 563.00 425.63 563.00C430.34 563.00 435.06 539.30 439.77 539.30C444.49 539.30 449.21 563.00 453.92 563.00C458.64 563.00 463.35 539.30 468.07 539.30C472.78 539.30 477.50 563.00 482.22 563.00C486.93 563.00 491.65 539.30 496.36 539.30C501.08 539.30 505.79 563.00 510.51 563.00C515.23 563.00 519.94 539.30 524.66 539.30C529.37 539.30 534.09 563.00 538.80 563.00C543.52 563.00 548.24 539.30 552.95 539.30C557.67 539.30 562.38 563.00 567.10 563.00C571.81 563.00 576.53 539.30 581.25 539.30C585.96 539.30 590.68 563.00 595.39 563.00C600.11 563.00 604.82 539.28 609.54 532.30C614.25 525.32 618.97 524.13 623.69 516.40C628.40 508.67 633.12 473.60 637.83 473.60C642.55 473.60 647.26 496.61 651.98 502.80C656.70 508.99 661.41 509.38 666.13 516.40C670.84 523.42 675.56 563.00 680.27 563.00C684.99 563.00 689.71 539.30 694.42 539.30C699.14 539.30 703.85 563.00 708.57 563.00C713.28 563.00 718.00 539.30 722.72 539.30C727.43 539.30 732.15 563.00 736.86 563.00C741.58 563.00 746.29 539.30 751.01 539.30C755.72 539.30 760.44 563.00 765.16 563.00C769.87 563.00 774.59 539.30 779.30 539.30C784.02 539.30 788.73 563.00 793.45 563.00C798.17 563.00 802.88 539.30 807.60 539.30C812.31 539.30 817.03 563.00 821.74 563.00C826.46 563.00 831.18 539.30 835.89 539.30C840.61 539.30 845.32 563.00 850.04 563.00C854.75 563.00 859.47 539.30 864.19 539.30C868.90 539.30 873.62 563.00 878.33 563.00C883.05 563.00 887.76 539.30 892.48 539.30C897.19 539.30 901.91 563.00 906.63 563.00C911.34 563.00 916.06 547.20 920.77 539.30" fill="none" stroke="#5794f2" stroke-width="2" stroke-linejoin="round" stroke-linecap="round"/><path d="M82.60 567.50C83.77 568.03 84.93 569.10 86.10 569.10C90.82 569.10 95.53 539.30 100.25 539.30C104.96 539.30 109.68 563.00 114.39 563.00C119.11 563.00 123.83 539.30 128.54 539.30C133.26 539.30 137.97 563.00 142.69 563.00C147.40 563.00 152.12 529.80 156.83 529.80C161.55 529.80 166.27 547.66 170.98 553.70C175.70 559.74 180.41 562.28 185.13 568.30C189.84 574.32 194.56 592.00 199.28 592.00C203.99 592.00 208.71 563.80 213.42 563.80C218.14 563.80 222.85 585.90 227.57 585.90C232.29 585.90 237.00 557.00 241.72 557.00C246.43 557.00 251.15 568.80 255.86 568.80C260.58 568.80 265.30 539.30 270.01 539.30C274.73 539.30 279.44 563.00 284.16 563.00C288.87 563.00 293.59 539.30 298.31 539.30C303.02 539.30 307.74 563.00 312.45 563.00C317.17 563.00 321.88 539.30 326.60 539.30C331.31 539.30 336.03 563.00 340.75 563.00C345.46 563.00 350.18 539.30 354.89 539.30C359.61 539.30 364.32 563.00 369.04 563.00C373.76 563.00 378.47 539.30 383.19 539.30C387.90 539.30 392.62 563.00 397.33 563.00C402.05 563.00 406.77 539.30 411.48 539.30C416.20 539.30 420.91 563.00 425.63 563.00C430.34 563.00 435.06 539.30 439.77 539.30C444.49 539.30 449.21 563.00 453.92 563.00C458.64 563.00 463.35 539.30 468.07 539.30C472.78 539.30 477.50 563.00 482.22 563.00C486.93 563.00 491.65 539.30 496.36 539.30C501.08 539.30 505.79 563.00 510.51 563.00C515.23 563.00 519.94 539.30 524.66 539.30C529.37 539.30 534.09 563.00 538.80 563.00C543.52 563.00 548.24 539.30 552.95 539.30C557.67 539.30 562.38 563.00 567.10 563.00C571.81 563.00 576.53 539.30 581.25 539.30C585.96 539.30 590.68 563.00 595.39 563.00C600.11 563.00 604.82 539.28 609.54 532.30C614.25 525.32 618.97 524.13 623.69 516.40C628.40 508.67 633.12 473.60 637.83 473.60C642.55 473.60 647.26 496.61 651.98 502.80C656.70 508.99 661.41 509.38 666.13 516.40C670.84 523.42 675.56 563.00 680.27 563.00C684.99 563.00 689.71 539.30 694.42 539.30C699.14 539.30 703.85 563.00 708.57 563.00C713.28 563.00 718.00 539.30 722.72 539.30C727.43 539.30 732.15 563.00 736.86 563.00C741.58 563.00 746.29 539.30 751.01 539.30C755.72 539.30 760.44 563.00 765.16 563.00C769.87 563.00 774.59 539.30 779.30 539.30C784.02 539.30 788.73 563.00 793.45 563.00C798.17 563.00 802.88 539.30 807.60 539.30C812.31 539.30 817.03 563.00 821.74 563.00C826.46 563.00 831.18 539.30 835.89 539.30C840.61 539.30 845.32 563.00 850.04 563.00C854.75 563.00 859.47 539.30 864.19 539.30C868.90 539.30 873.62 563.00 878.33 563.00C883.05 563.00 887.76 539.30 892.48 539.30C897.19 539.30 901.91 563.00 906.63 563.00C911.34 563.00 916.06 547.20 920.77 539.30" fill="none" stroke="#73bf69" stroke-width="2" stroke-linejoin="round" stroke-linecap="round"/></svg>
<span class="t" style="font-size:12.48px;color:#ccccdc;top:460.00px;letter-spacing:0.266px;-webkit-text-stroke:0.18px;right:1827.23px;">2 req/s</span>
<span class="t" style="font-size:12.48px;color:#ccccdc;top:486.00px;letter-spacing:-0.018px;-webkit-text-stroke:0.18px;right:1827.52px;">1.9 req/s</span>
<span class="t" style="font-size:12.48px;color:#ccccdc;top:512.00px;letter-spacing:-0.041px;-webkit-text-stroke:0.18px;right:1827.54px;">1.8 req/s</span>
<span class="t" style="font-size:12.48px;color:#ccccdc;top:537.00px;letter-spacing:-0.100px;-webkit-text-stroke:0.18px;right:1827.60px;">1.7 req/s</span>
<span class="t" style="font-size:12.48px;color:#ccccdc;top:563.00px;letter-spacing:-0.043px;-webkit-text-stroke:0.18px;right:1827.54px;">1.6 req/s</span>
<span class="t" style="font-size:12.48px;color:#ccccdc;top:589.00px;letter-spacing:-0.044px;-webkit-text-stroke:0.18px;right:1827.54px;">1.5 req/s</span>
<span class="t" style="font-size:12.48px;color:#ccccdc;top:614.00px;letter-spacing:-0.141px;-webkit-text-stroke:0.18px;left:113.80px;transform:translateX(-50%);margin-left:-0.07px;">20:15</span>
<span class="t" style="font-size:12.48px;color:#ccccdc;top:614.00px;letter-spacing:0.402px;-webkit-text-stroke:0.18px;left:396.70px;transform:translateX(-50%);margin-left:0.20px;">20:20</span>
<span class="t" style="font-size:12.48px;color:#ccccdc;top:614.00px;letter-spacing:0.347px;-webkit-text-stroke:0.18px;left:679.70px;transform:translateX(-50%);margin-left:0.17px;">20:25</span>
<span class="t" style="font-size:12.11px;color:#6e9fff;top:631.00px;letter-spacing:0.325px;-webkit-text-stroke:0.50px;left:55.40px;">Name</span>
<span class="t" style="font-size:12.11px;color:#6e9fff;top:631.00px;letter-spacing:0.467px;-webkit-text-stroke:0.50px;right:1120.23px;">Mean</span>
<span class="t" style="font-size:12.11px;color:#6e9fff;top:631.00px;letter-spacing:0.527px;-webkit-text-stroke:0.50px;right:1054.67px;">Max</span>
<span class="t" style="font-size:12.11px;color:#6e9fff;top:631.00px;letter-spacing:0.439px;-webkit-text-stroke:0.50px;right:973.06px;">Last *</span>
<div style="position:absolute;left:25.00px;top:649.10px;width:915.00px;height:1.00px;background:#2c2e34;"></div>
<div style="position:absolute;left:25.00px;top:672.80px;width:915.00px;height:1.00px;background:#2c2e34;"></div>
<div style="position:absolute;left:25.00px;top:696.50px;width:915.00px;height:1.00px;background:#2c2e34;"></div>
<div style="position:absolute;left:33.00px;top:659.30px;width:14.00px;height:4.00px;background:#5794f2;border-radius:2px;"></div>
<span class="t" style="font-size:12.48px;color:#ccccdc;top:655.00px;-webkit-text-stroke:0.18px;left:55.40px;"><span style="letter-spacing:-0.489px">RPS (</span><span style="font-size:11.28px;letter-spacing:-0.780px;margin-right:0.62px;position:relative;top:-1.02px">전체</span><span style="letter-spacing:0.221px">)</span></span>
<span class="t" style="font-size:12.48px;color:#ccccdc;top:655.00px;letter-spacing:0.010px;-webkit-text-stroke:0.18px;right:1118.19px;">1.68 req/s</span>
<span class="t" style="font-size:12.48px;color:#ccccdc;top:655.00px;letter-spacing:-0.055px;-webkit-text-stroke:0.18px;right:1045.65px;">1.97 req/s</span>
<span class="t" style="font-size:12.48px;color:#ccccdc;top:655.00px;letter-spacing:-0.296px;-webkit-text-stroke:0.18px;right:973.80px;">1.71 req/s</span>
<div style="position:absolute;left:33.00px;top:683.00px;width:14.00px;height:4.00px;background:#73bf69;border-radius:2px;"></div>
<span class="t" style="font-size:12.48px;color:#ccccdc;top:679.00px;letter-spacing:0.021px;-webkit-text-stroke:0.18px;left:55.40px;">TPS (2xx)</span>
<span class="t" style="font-size:12.48px;color:#ccccdc;top:679.00px;letter-spacing:-0.054px;-webkit-text-stroke:0.18px;right:1118.25px;">1.67 req/s</span>
<span class="t" style="font-size:12.48px;color:#ccccdc;top:679.00px;letter-spacing:-0.055px;-webkit-text-stroke:0.18px;right:1045.65px;">1.97 req/s</span>
<span class="t" style="font-size:12.48px;color:#ccccdc;top:679.00px;letter-spacing:-0.296px;-webkit-text-stroke:0.18px;right:973.80px;">1.71 req/s</span>
<div class="panel" style="left:964px;top:411px;width:933px;height:296px;"></div>
<h2 class="t" style="font-size:14.22px;color:#ccccdc;top:421.00px;-webkit-text-stroke:0.50px;left:973.20px;"><span style="font-size:13.16px;letter-spacing:-0.910px;margin-right:0.73px;position:relative;top:-1.19px">상태코드별</span><span style="letter-spacing:-0.219px"> </span><span style="font-size:13.16px;letter-spacing:-0.910px;margin-right:0.73px;position:relative;top:-1.19px">요청</span><span style="letter-spacing:-0.219px"> </span><span style="font-size:13.16px;letter-spacing:-0.910px;margin-right:0.73px;position:relative;top:-1.19px">추이</span></h2>
<svg style="position:absolute;left:1106.50px;top:420.00px;" width="16.00" height="16.00" viewBox="0 0 16.00 16.00"><circle cx="8" cy="8" r="6.2" fill="none" stroke="#9a9ba6" stroke-width="1.2"/><path d="M8 7.9 V10.6" stroke="#9a9ba6" stroke-width="1.3" stroke-linecap="round"/><circle cx="8" cy="5.5" r="0.8" fill="#9a9ba6"/></svg>
<svg style="position:absolute;left:0.00px;top:0.00px;pointer-events:none;" width="1905.00" height="1407.00" viewBox="0 0 1905.00 1407.00"><defs><linearGradient id="gg2" gradientUnits="userSpaceOnUse" x1="0" y1="470" x2="0" y2="590"><stop offset="0" stop-color="#73bf69" stop-opacity="0.2"/><stop offset="1" stop-color="#73bf69" stop-opacity="0.02"/></linearGradient></defs><path d="M1033.0 472.5 H1881.0" stroke="#2b2f33" stroke-width="1"/><path d="M1033.0 501.5 H1881.0" stroke="#2b2f33" stroke-width="1"/><path d="M1033.0 531.5 H1881.0" stroke="#2b2f33" stroke-width="1"/><path d="M1033.0 560.5 H1881.0" stroke="#2b2f33" stroke-width="1"/><path d="M1033.0 589.5 H1881.0" stroke="#2b2f33" stroke-width="1"/><path d="M1064.5 460.5 V595.0" stroke="#2b2f33" stroke-width="1"/><path d="M1346.5 460.5 V595.0" stroke="#2b2f33" stroke-width="1"/><path d="M1629.5 460.5 V595.0" stroke="#2b2f33" stroke-width="1"/><path d="M1032.30 495.88C1033.20 496.00 1034.10 496.24 1035.00 496.24C1039.71 496.24 1044.41 489.51 1049.12 489.51C1053.83 489.51 1058.53 494.86 1063.24 494.86C1067.95 494.86 1072.65 489.51 1077.36 489.51C1082.07 489.51 1086.77 494.86 1091.48 494.86C1096.19 494.86 1100.89 487.37 1105.60 487.37C1110.31 487.37 1115.01 491.40 1119.72 492.76C1124.43 494.13 1129.13 494.70 1133.84 496.06C1138.55 497.42 1143.25 501.41 1147.96 501.41C1152.67 501.41 1157.37 495.04 1162.08 495.04C1166.79 495.04 1171.49 500.03 1176.20 500.03C1180.91 500.03 1185.61 493.51 1190.32 493.51C1195.03 493.51 1199.73 496.17 1204.44 496.17C1209.15 496.17 1213.85 489.51 1218.56 489.51C1223.27 489.51 1227.97 494.86 1232.68 494.86C1237.39 494.86 1242.09 489.51 1246.80 489.51C1251.51 489.51 1256.21 494.86 1260.92 494.86C1265.63 494.86 1270.33 489.51 1275.04 489.51C1279.75 489.51 1284.45 494.86 1289.16 494.86C1293.87 494.86 1298.57 489.51 1303.28 489.51C1307.99 489.51 1312.69 494.86 1317.40 494.86C1322.11 494.86 1326.81 489.51 1331.52 489.51C1336.23 489.51 1340.93 494.86 1345.64 494.86C1350.35 494.86 1355.05 489.51 1359.76 489.51C1364.47 489.51 1369.17 494.86 1373.88 494.86C1378.59 494.86 1383.29 489.51 1388.00 489.51C1392.71 489.51 1397.41 494.86 1402.12 494.86C1406.83 494.86 1411.53 489.51 1416.24 489.51C1420.95 489.51 1425.65 494.86 1430.36 494.86C1435.07 494.86 1439.77 489.51 1444.48 489.51C1449.19 489.51 1453.89 494.86 1458.60 494.86C1463.31 494.86 1468.01 489.51 1472.72 489.51C1477.43 489.51 1482.13 494.86 1486.84 494.86C1491.55 494.86 1496.25 489.51 1500.96 489.51C1505.67 489.51 1510.37 494.86 1515.08 494.86C1519.79 494.86 1524.49 489.51 1529.20 489.51C1533.91 489.51 1538.61 494.86 1543.32 494.86C1548.03 494.86 1552.73 489.51 1557.44 487.93C1562.15 486.35 1566.85 486.08 1571.56 484.34C1576.27 482.59 1580.97 474.67 1585.68 474.67C1590.39 474.67 1595.09 479.87 1599.80 481.27C1604.51 482.67 1609.21 482.75 1613.92 484.34C1618.63 485.92 1623.33 494.86 1628.04 494.86C1632.75 494.86 1637.45 489.51 1642.16 489.51C1646.87 489.51 1651.57 494.86 1656.28 494.86C1660.99 494.86 1665.69 489.51 1670.40 489.51C1675.11 489.51 1679.81 494.86 1684.52 494.86C1689.23 494.86 1693.93 489.51 1698.64 489.51C1703.35 489.51 1708.05 494.86 1712.76 494.86C1717.47 494.86 1722.17 489.51 1726.88 489.51C1731.59 489.51 1736.29 494.86 1741.00 494.86C1745.71 494.86 1750.41 489.51 1755.12 489.51C1759.83 489.51 1764.53 494.86 1769.24 494.86C1773.95 494.86 1778.65 489.51 1783.36 489.51C1788.07 489.51 1792.77 494.86 1797.48 494.86C1802.19 494.86 1806.89 489.51 1811.60 489.51C1816.31 489.51 1821.01 494.86 1825.72 494.86C1830.43 494.86 1835.13 489.51 1839.84 489.51C1844.55 489.51 1849.25 494.86 1853.96 494.86C1858.67 494.86 1863.37 491.29 1868.08 489.51L1868.08 590 L1032.30 590Z" fill="url(#gg2)"/><path d="M1032.30 495.88C1033.20 496.00 1034.10 496.24 1035.00 496.24C1039.71 496.24 1044.41 489.51 1049.12 489.51C1053.83 489.51 1058.53 494.86 1063.24 494.86C1067.95 494.86 1072.65 489.51 1077.36 489.51C1082.07 489.51 1086.77 494.86 1091.48 494.86C1096.19 494.86 1100.89 487.37 1105.60 487.37C1110.31 487.37 1115.01 491.40 1119.72 492.76C1124.43 494.13 1129.13 494.70 1133.84 496.06C1138.55 497.42 1143.25 501.41 1147.96 501.41C1152.67 501.41 1157.37 495.04 1162.08 495.04C1166.79 495.04 1171.49 500.03 1176.20 500.03C1180.91 500.03 1185.61 493.51 1190.32 493.51C1195.03 493.51 1199.73 496.17 1204.44 496.17C1209.15 496.17 1213.85 489.51 1218.56 489.51C1223.27 489.51 1227.97 494.86 1232.68 494.86C1237.39 494.86 1242.09 489.51 1246.80 489.51C1251.51 489.51 1256.21 494.86 1260.92 494.86C1265.63 494.86 1270.33 489.51 1275.04 489.51C1279.75 489.51 1284.45 494.86 1289.16 494.86C1293.87 494.86 1298.57 489.51 1303.28 489.51C1307.99 489.51 1312.69 494.86 1317.40 494.86C1322.11 494.86 1326.81 489.51 1331.52 489.51C1336.23 489.51 1340.93 494.86 1345.64 494.86C1350.35 494.86 1355.05 489.51 1359.76 489.51C1364.47 489.51 1369.17 494.86 1373.88 494.86C1378.59 494.86 1383.29 489.51 1388.00 489.51C1392.71 489.51 1397.41 494.86 1402.12 494.86C1406.83 494.86 1411.53 489.51 1416.24 489.51C1420.95 489.51 1425.65 494.86 1430.36 494.86C1435.07 494.86 1439.77 489.51 1444.48 489.51C1449.19 489.51 1453.89 494.86 1458.60 494.86C1463.31 494.86 1468.01 489.51 1472.72 489.51C1477.43 489.51 1482.13 494.86 1486.84 494.86C1491.55 494.86 1496.25 489.51 1500.96 489.51C1505.67 489.51 1510.37 494.86 1515.08 494.86C1519.79 494.86 1524.49 489.51 1529.20 489.51C1533.91 489.51 1538.61 494.86 1543.32 494.86C1548.03 494.86 1552.73 489.51 1557.44 487.93C1562.15 486.35 1566.85 486.08 1571.56 484.34C1576.27 482.59 1580.97 474.67 1585.68 474.67C1590.39 474.67 1595.09 479.87 1599.80 481.27C1604.51 482.67 1609.21 482.75 1613.92 484.34C1618.63 485.92 1623.33 494.86 1628.04 494.86C1632.75 494.86 1637.45 489.51 1642.16 489.51C1646.87 489.51 1651.57 494.86 1656.28 494.86C1660.99 494.86 1665.69 489.51 1670.40 489.51C1675.11 489.51 1679.81 494.86 1684.52 494.86C1689.23 494.86 1693.93 489.51 1698.64 489.51C1703.35 489.51 1708.05 494.86 1712.76 494.86C1717.47 494.86 1722.17 489.51 1726.88 489.51C1731.59 489.51 1736.29 494.86 1741.00 494.86C1745.71 494.86 1750.41 489.51 1755.12 489.51C1759.83 489.51 1764.53 494.86 1769.24 494.86C1773.95 494.86 1778.65 489.51 1783.36 489.51C1788.07 489.51 1792.77 494.86 1797.48 494.86C1802.19 494.86 1806.89 489.51 1811.60 489.51C1816.31 489.51 1821.01 494.86 1825.72 494.86C1830.43 494.86 1835.13 489.51 1839.84 489.51C1844.55 489.51 1849.25 494.86 1853.96 494.86C1858.67 494.86 1863.37 491.29 1868.08 489.51" fill="none" stroke="#73bf69" stroke-width="2" stroke-linejoin="round" stroke-linecap="round"/><path d="M1032.3 590 H1868.1" stroke="#ff9830" stroke-width="2"/><path d="M1032.30 589.00C1038.20 589.03 1044.10 589.04 1050.00 589.10C1055.33 589.15 1060.67 589.49 1066.00 589.60C1072.67 589.74 1079.33 589.90 1086.00 589.90C1090.00 589.90 1094.00 588.39 1098.00 588.00C1102.33 587.58 1106.67 587.10 1111.00 587.10C1115.33 587.10 1119.67 587.47 1124.00 587.80C1128.00 588.10 1132.00 589.01 1136.00 589.30C1140.00 589.59 1144.00 589.90 1148.00 589.90C1165.33 589.90 1182.67 589.90 1200.00 589.90C1422.70 589.90 1645.40 589.90 1868.10 589.90" fill="none" stroke="#f2495c" stroke-width="2" stroke-linecap="butt"/></svg>
<span class="t" style="font-size:12.48px;color:#ccccdc;top:467.00px;letter-spacing:0.266px;-webkit-text-stroke:0.18px;right:877.23px;">2 req/s</span>
<span class="t" style="font-size:12.48px;color:#ccccdc;top:496.00px;letter-spacing:-0.044px;-webkit-text-stroke:0.18px;right:877.54px;">1.5 req/s</span>
<span class="t" style="font-size:12.48px;color:#ccccdc;top:525.00px;letter-spacing:-0.082px;-webkit-text-stroke:0.18px;right:877.58px;">1 req/s</span>
<span class="t" style="font-size:12.48px;color:#ccccdc;top:555.00px;letter-spacing:0.221px;-webkit-text-stroke:0.18px;right:877.28px;">0.5 req/s</span>
<span class="t" style="font-size:12.48px;color:#ccccdc;top:584.00px;letter-spacing:0.302px;-webkit-text-stroke:0.18px;right:877.20px;">0 req/s</span>
<span class="t" style="font-size:12.48px;color:#ccccdc;top:599.00px;letter-spacing:-0.141px;-webkit-text-stroke:0.18px;left:1063.80px;transform:translateX(-50%);margin-left:-0.07px;">20:15</span>
<span class="t" style="font-size:12.48px;color:#ccccdc;top:599.00px;letter-spacing:0.402px;-webkit-text-stroke:0.18px;left:1345.70px;transform:translateX(-50%);margin-left:0.20px;">20:20</span>
<span class="t" style="font-size:12.48px;color:#ccccdc;top:599.00px;letter-spacing:0.347px;-webkit-text-stroke:0.18px;left:1628.70px;transform:translateX(-50%);margin-left:0.17px;">20:25</span>
<span class="t" style="font-size:12.11px;color:#6e9fff;top:617.00px;letter-spacing:0.325px;-webkit-text-stroke:0.50px;left:1003.40px;">Name</span>
<span class="t" style="font-size:12.11px;color:#6e9fff;top:617.00px;letter-spacing:0.467px;-webkit-text-stroke:0.50px;right:213.23px;">Mean</span>
<span class="t" style="font-size:12.11px;color:#6e9fff;top:617.00px;letter-spacing:0.527px;-webkit-text-stroke:0.50px;right:122.67px;">Max</span>
<span class="t" style="font-size:12.11px;color:#6e9fff;top:617.00px;letter-spacing:0.439px;-webkit-text-stroke:0.50px;right:25.56px;">Last *</span>
<div style="position:absolute;left:973.00px;top:634.90px;width:915.00px;height:1.00px;background:#2c2e34;"></div>
<div style="position:absolute;left:973.00px;top:658.40px;width:915.00px;height:1.00px;background:#2c2e34;"></div>
<div style="position:absolute;left:973.00px;top:681.90px;width:915.00px;height:1.00px;background:#2c2e34;"></div>
<div style="position:absolute;left:981.00px;top:645.00px;width:14.00px;height:4.00px;background:#73bf69;border-radius:2px;"></div>
<span class="t" style="font-size:12.48px;color:#ccccdc;top:641.00px;letter-spacing:0.334px;-webkit-text-stroke:0.18px;left:1003.40px;">2xx</span>
<span class="t" style="font-size:12.48px;color:#ccccdc;top:641.00px;letter-spacing:-0.054px;-webkit-text-stroke:0.18px;right:185.75px;">1.67 req/s</span>
<span class="t" style="font-size:12.48px;color:#ccccdc;top:641.00px;letter-spacing:-0.055px;-webkit-text-stroke:0.18px;right:98.05px;">1.97 req/s</span>
<span class="t" style="font-size:12.48px;color:#ccccdc;top:641.00px;letter-spacing:-0.296px;-webkit-text-stroke:0.18px;right:25.70px;">1.71 req/s</span>
<div style="position:absolute;left:981.00px;top:668.50px;width:14.00px;height:4.00px;background:#ff9830;border-radius:2px;"></div>
<span class="t" style="font-size:12.48px;color:#ccccdc;top:664.00px;letter-spacing:0.478px;-webkit-text-stroke:0.18px;left:1003.40px;">4xx</span>
<span class="t" style="font-size:12.48px;color:#ccccdc;top:664.00px;letter-spacing:0.302px;-webkit-text-stroke:0.18px;right:185.40px;">0 req/s</span>
<span class="t" style="font-size:12.48px;color:#ccccdc;top:664.00px;letter-spacing:0.302px;-webkit-text-stroke:0.18px;right:97.70px;">0 req/s</span>
<span class="t" style="font-size:12.48px;color:#ccccdc;top:664.00px;letter-spacing:0.302px;-webkit-text-stroke:0.18px;right:25.10px;">0 req/s</span>
<div style="position:absolute;left:981.00px;top:692.00px;width:14.00px;height:4.00px;background:#f2495c;border-radius:2px;"></div>
<span class="t" style="font-size:12.48px;color:#ccccdc;top:688.00px;letter-spacing:0.326px;-webkit-text-stroke:0.18px;left:1003.40px;">5xx</span>
<span class="t" style="font-size:12.48px;color:#ccccdc;top:688.00px;letter-spacing:0.305px;-webkit-text-stroke:0.18px;right:185.39px;">0.00352 req/s</span>
<span class="t" style="font-size:12.48px;color:#ccccdc;top:688.00px;letter-spacing:0.077px;-webkit-text-stroke:0.18px;right:97.92px;">0.0561 req/s</span>
<span class="t" style="font-size:12.48px;color:#ccccdc;top:688.00px;letter-spacing:0.302px;-webkit-text-stroke:0.18px;right:25.10px;">0 req/s</span>
<div style="position:absolute;left:972.00px;top:699.00px;width:917.00px;height:7.00px;background:#181b1f;"></div>
<div class="panel" style="left:16px;top:753px;width:933px;height:296px;"></div>
<h2 class="t" style="font-size:14.22px;color:#ccccdc;top:763.00px;-webkit-text-stroke:0.50px;left:25.20px;"><span style="font-size:13.16px;letter-spacing:-0.910px;margin-right:0.73px;position:relative;top:-1.19px">응답시간</span><span style="letter-spacing:-0.219px"> </span><span style="font-size:13.16px;letter-spacing:-0.910px;margin-right:0.73px;position:relative;top:-1.19px">백분위수</span><span style="letter-spacing:0.493px"> (P50/P95/P99)</span></h2>
<svg style="position:absolute;left:248.50px;top:762.00px;" width="16.00" height="16.00" viewBox="0 0 16.00 16.00"><circle cx="8" cy="8" r="6.2" fill="none" stroke="#9a9ba6" stroke-width="1.2"/><path d="M8 7.9 V10.6" stroke="#9a9ba6" stroke-width="1.3" stroke-linecap="round"/><circle cx="8" cy="5.5" r="0.8" fill="#9a9ba6"/></svg>
<svg style="position:absolute;left:0.00px;top:0.00px;pointer-events:none;" width="1905.00" height="1407.00" viewBox="0 0 1905.00 1407.00"><defs><linearGradient id="go" gradientUnits="userSpaceOnUse" x1="0" y1="805" x2="0" y2="932"><stop offset="0" stop-color="#ff9830" stop-opacity="0.12"/><stop offset="1" stop-color="#ff9830" stop-opacity="0.01"/></linearGradient>
<linearGradient id="gy" gradientUnits="userSpaceOnUse" x1="0" y1="805" x2="0" y2="932"><stop offset="0" stop-color="#fade2a" stop-opacity="0.1"/><stop offset="1" stop-color="#fade2a" stop-opacity="0.0"/></linearGradient></defs><path d="M70.0 811.5 H933.0" stroke="#2b2f33" stroke-width="1"/><path d="M70.0 826.5 H933.0" stroke="#2b2f33" stroke-width="1"/><path d="M70.0 841.5 H933.0" stroke="#2b2f33" stroke-width="1"/><path d="M70.0 856.5 H933.0" stroke="#2b2f33" stroke-width="1"/><path d="M70.0 871.5 H933.0" stroke="#2b2f33" stroke-width="1"/><path d="M70.0 887.5 H933.0" stroke="#2b2f33" stroke-width="1"/><path d="M70.0 902.5 H933.0" stroke="#2b2f33" stroke-width="1"/><path d="M70.0 917.5 H933.0" stroke="#2b2f33" stroke-width="1"/><path d="M70.0 932.5 H933.0" stroke="#2b2f33" stroke-width="1"/><path d="M101.5 802.5 V936.5" stroke="#2b2f33" stroke-width="1"/><path d="M389.5 802.5 V936.5" stroke="#2b2f33" stroke-width="1"/><path d="M677.5 802.5 V936.5" stroke="#2b2f33" stroke-width="1"/><path d="M69.2 837.8 L389.4 813.8 V932.2 H69.2Z" fill="url(#go)"/><path d="M69.2 925.2 L389.4 923.9" stroke="#73bf69" stroke-width="2" stroke-linecap="butt"/><path d="M69.2 910.8 L389.4 908.1" stroke="#fade2a" stroke-width="2" stroke-linecap="butt"/><path d="M69.2 837.8 L389.4 813.8" stroke="#ff9830" stroke-width="2" stroke-linecap="butt"/></svg>
<span class="t" style="font-size:12.48px;color:#ccccdc;top:806.00px;letter-spacing:0.246px;-webkit-text-stroke:0.18px;right:1840.35px;">80 ms</span>
<span class="t" style="font-size:12.48px;color:#ccccdc;top:821.00px;letter-spacing:0.082px;-webkit-text-stroke:0.18px;right:1840.52px;">70 ms</span>
<span class="t" style="font-size:12.48px;color:#ccccdc;top:836.00px;letter-spacing:0.250px;-webkit-text-stroke:0.18px;right:1840.35px;">60 ms</span>
<span class="t" style="font-size:12.48px;color:#ccccdc;top:851.00px;letter-spacing:0.221px;-webkit-text-stroke:0.18px;right:1840.38px;">50 ms</span>
<span class="t" style="font-size:12.48px;color:#ccccdc;top:866.00px;letter-spacing:0.312px;-webkit-text-stroke:0.18px;right:1840.29px;">40 ms</span>
<span class="t" style="font-size:12.48px;color:#ccccdc;top:881.00px;letter-spacing:0.244px;-webkit-text-stroke:0.18px;right:1840.36px;">30 ms</span>
<span class="t" style="font-size:12.48px;color:#ccccdc;top:896.00px;letter-spacing:0.225px;-webkit-text-stroke:0.18px;right:1840.37px;">20 ms</span>
<span class="t" style="font-size:12.48px;color:#ccccdc;top:911.00px;letter-spacing:-0.262px;-webkit-text-stroke:0.18px;right:1840.86px;">10 ms</span>
<span class="t" style="font-size:12.48px;color:#ccccdc;top:926.00px;letter-spacing:0.211px;-webkit-text-stroke:0.18px;right:1840.39px;">0 s</span>
<span class="t" style="font-size:12.48px;color:#ccccdc;top:941.00px;letter-spacing:-0.141px;-webkit-text-stroke:0.18px;left:100.70px;transform:translateX(-50%);margin-left:-0.07px;">20:15</span>
<span class="t" style="font-size:12.48px;color:#ccccdc;top:941.00px;letter-spacing:0.402px;-webkit-text-stroke:0.18px;left:388.60px;transform:translateX(-50%);margin-left:0.20px;">20:20</span>
<span class="t" style="font-size:12.48px;color:#ccccdc;top:941.00px;letter-spacing:0.347px;-webkit-text-stroke:0.18px;left:676.50px;transform:translateX(-50%);margin-left:0.17px;">20:25</span>
<span class="t" style="font-size:12.11px;color:#6e9fff;top:959.00px;letter-spacing:0.325px;-webkit-text-stroke:0.50px;left:55.40px;">Name</span>
<span class="t" style="font-size:12.11px;color:#6e9fff;top:959.00px;letter-spacing:0.467px;-webkit-text-stroke:0.50px;right:1108.13px;">Mean</span>
<span class="t" style="font-size:12.11px;color:#6e9fff;top:959.00px;letter-spacing:0.527px;-webkit-text-stroke:0.50px;right:1045.07px;">Max</span>
<span class="t" style="font-size:12.11px;color:#6e9fff;top:959.00px;letter-spacing:0.439px;-webkit-text-stroke:0.50px;right:973.06px;">Last *</span>
<div style="position:absolute;left:25.00px;top:977.10px;width:915.00px;height:1.00px;background:#2c2e34;"></div>
<div style="position:absolute;left:25.00px;top:1000.55px;width:915.00px;height:1.00px;background:#2c2e34;"></div>
<div style="position:absolute;left:25.00px;top:1024.00px;width:915.00px;height:1.00px;background:#2c2e34;"></div>
<div style="position:absolute;left:33.00px;top:987.50px;width:14.00px;height:4.00px;background:#73bf69;border-radius:2px;"></div>
<span class="t" style="font-size:12.48px;color:#ccccdc;top:983.00px;letter-spacing:0.109px;-webkit-text-stroke:0.18px;left:55.40px;">P50</span>
<span class="t" style="font-size:12.48px;color:#ccccdc;top:983.00px;letter-spacing:0.236px;-webkit-text-stroke:0.18px;right:1108.36px;">4.04 ms</span>
<span class="t" style="font-size:12.48px;color:#ccccdc;top:983.00px;letter-spacing:0.132px;-webkit-text-stroke:0.18px;right:1045.47px;">5.30 ms</span>
<span class="t" style="font-size:12.48px;color:#ccccdc;top:983.00px;letter-spacing:0.132px;-webkit-text-stroke:0.18px;right:973.37px;">5.30 ms</span>
<div style="position:absolute;left:33.00px;top:1010.95px;width:14.00px;height:4.00px;background:#fade2a;border-radius:2px;"></div>
<span class="t" style="font-size:12.48px;color:#ccccdc;top:1007.00px;letter-spacing:0.066px;-webkit-text-stroke:0.18px;left:55.40px;">P95</span>
<span class="t" style="font-size:12.48px;color:#ccccdc;top:1007.00px;letter-spacing:-0.196px;-webkit-text-stroke:0.18px;right:1108.80px;">12.6 ms</span>
<span class="t" style="font-size:12.48px;color:#ccccdc;top:1007.00px;letter-spacing:-0.320px;-webkit-text-stroke:0.18px;right:1045.92px;">15.7 ms</span>
<span class="t" style="font-size:12.48px;color:#ccccdc;top:1007.00px;letter-spacing:-0.320px;-webkit-text-stroke:0.18px;right:973.82px;">15.7 ms</span>
<div style="position:absolute;left:33.00px;top:1034.40px;width:14.00px;height:4.00px;background:#ff9830;border-radius:2px;"></div>
<span class="t" style="font-size:12.48px;color:#ccccdc;top:1030.00px;letter-spacing:0.115px;-webkit-text-stroke:0.18px;left:55.40px;">P99</span>
<span class="t" style="font-size:12.48px;color:#ccccdc;top:1030.00px;letter-spacing:0.190px;-webkit-text-stroke:0.18px;right:1108.41px;">49.8 ms</span>
<span class="t" style="font-size:12.48px;color:#ccccdc;top:1030.00px;letter-spacing:0.047px;-webkit-text-stroke:0.18px;right:1045.55px;">78.0 ms</span>
<span class="t" style="font-size:12.48px;color:#ccccdc;top:1030.00px;letter-spacing:0.047px;-webkit-text-stroke:0.18px;right:973.45px;">78.0 ms</span>
<div class="panel" style="left:964px;top:753px;width:933px;height:296px;"></div>
<h2 class="t" style="font-size:14.22px;color:#ccccdc;top:763.00px;-webkit-text-stroke:0.50px;left:973.20px;"><span style="font-size:13.16px;letter-spacing:-0.910px;margin-right:0.73px;position:relative;top:-1.19px">느린</span><span style="letter-spacing:-0.219px"> </span><span style="font-size:13.16px;letter-spacing:-0.910px;margin-right:0.73px;position:relative;top:-1.19px">엔드포인트</span><span style="letter-spacing:-0.206px"> TOP 10</span></h2>
<svg style="position:absolute;left:1130.50px;top:762.00px;" width="16.00" height="16.00" viewBox="0 0 16.00 16.00"><circle cx="8" cy="8" r="6.2" fill="none" stroke="#9a9ba6" stroke-width="1.2"/><path d="M8 7.9 V10.6" stroke="#9a9ba6" stroke-width="1.3" stroke-linecap="round"/><circle cx="8" cy="5.5" r="0.8" fill="#9a9ba6"/></svg>
<div class="bargauge">
<i style="left:1299px;top:793.80px;background-image:radial-gradient(rgb(115,191,105) 10%,rgba(115,191,105,0.55))"></i>
<i style="left:1311px;top:793.80px;background:#2a392c"></i>
<i style="left:1323px;top:793.80px;background:#2b392b"></i>
<i style="left:1335px;top:793.80px;background:#2c392a"></i>
<i style="left:1347px;top:793.80px;background:#2e3a2a"></i>
<i style="left:1359px;top:793.80px;background:#2f3a29"></i>
<i style="left:1371px;top:793.80px;background:#303a29"></i>
<i style="left:1383px;top:793.80px;background:#323a28"></i>
<i style="left:1395px;top:793.80px;background:#333b28"></i>
<i style="left:1407px;top:793.80px;background:#343b27"></i>
<i style="left:1419px;top:793.80px;background:#353b27"></i>
<i style="left:1431px;top:793.80px;background:#363b26"></i>
<i style="left:1443px;top:793.80px;background:#373b26"></i>
<i style="left:1455px;top:793.80px;background:#383b25"></i>
<i style="left:1467px;top:793.80px;background:#393a25"></i>
<i style="left:1479px;top:793.80px;background:#3a3a25"></i>
<i style="left:1491px;top:793.80px;background:#3b3a25"></i>
<i style="left:1503px;top:793.80px;background:#3c3924"></i>
<i style="left:1515px;top:793.80px;background:#3c3924"></i>
<i style="left:1527px;top:793.80px;background:#3d3824"></i>
<i style="left:1539px;top:793.80px;background:#3e3724"></i>
<i style="left:1551px;top:793.80px;background:#3e3724"></i>
<i style="left:1563px;top:793.80px;background:#3e3625"></i>
<i style="left:1575px;top:793.80px;background:#3f3525"></i>
<i style="left:1587px;top:793.80px;background:#3f3425"></i>
<i style="left:1599px;top:793.80px;background:#3f3225"></i>
<i style="left:1611px;top:793.80px;background:#3f3126"></i>
<i style="left:1623px;top:793.80px;background:#3f3026"></i>
<i style="left:1635px;top:793.80px;background:#402f26"></i>
<i style="left:1647px;top:793.80px;background:#402d27"></i>
<i style="left:1659px;top:793.80px;background:#402c27"></i>
<i style="left:1671px;top:793.80px;background:#402b28"></i>
<i style="left:1683px;top:793.80px;background:#402928"></i>
<i style="left:1695px;top:793.80px;background:#3f2828"></i>
<i style="left:1707px;top:793.80px;background:#3f2629"></i>
<i style="left:1719px;top:793.80px;background:#3f2529"></i>
<i style="left:1299px;top:814.49px;background-image:radial-gradient(rgb(115,191,105) 10%,rgba(115,191,105,0.55))"></i>
<i style="left:1311px;top:814.49px;background:#2a392c"></i>
<i style="left:1323px;top:814.49px;background:#2b392b"></i>
<i style="left:1335px;top:814.49px;background:#2c392a"></i>
<i style="left:1347px;top:814.49px;background:#2e3a2a"></i>
<i style="left:1359px;top:814.49px;background:#2f3a29"></i>
<i style="left:1371px;top:814.49px;background:#303a29"></i>
<i style="left:1383px;top:814.49px;background:#323a28"></i>
<i style="left:1395px;top:814.49px;background:#333b28"></i>
<i style="left:1407px;top:814.49px;background:#343b27"></i>
<i style="left:1419px;top:814.49px;background:#353b27"></i>
<i style="left:1431px;top:814.49px;background:#363b26"></i>
<i style="left:1443px;top:814.49px;background:#373b26"></i>
<i style="left:1455px;top:814.49px;background:#383b25"></i>
<i style="left:1467px;top:814.49px;background:#393a25"></i>
<i style="left:1479px;top:814.49px;background:#3a3a25"></i>
<i style="left:1491px;top:814.49px;background:#3b3a25"></i>
<i style="left:1503px;top:814.49px;background:#3c3924"></i>
<i style="left:1515px;top:814.49px;background:#3c3924"></i>
<i style="left:1527px;top:814.49px;background:#3d3824"></i>
<i style="left:1539px;top:814.49px;background:#3e3724"></i>
<i style="left:1551px;top:814.49px;background:#3e3724"></i>
<i style="left:1563px;top:814.49px;background:#3e3625"></i>
<i style="left:1575px;top:814.49px;background:#3f3525"></i>
<i style="left:1587px;top:814.49px;background:#3f3425"></i>
<i style="left:1599px;top:814.49px;background:#3f3225"></i>
<i style="left:1611px;top:814.49px;background:#3f3126"></i>
<i style="left:1623px;top:814.49px;background:#3f3026"></i>
<i style="left:1635px;top:814.49px;background:#402f26"></i>
<i style="left:1647px;top:814.49px;background:#402d27"></i>
<i style="left:1659px;top:814.49px;background:#402c27"></i>
<i style="left:1671px;top:814.49px;background:#402b28"></i>
<i style="left:1683px;top:814.49px;background:#402928"></i>
<i style="left:1695px;top:814.49px;background:#3f2828"></i>
<i style="left:1707px;top:814.49px;background:#3f2629"></i>
<i style="left:1719px;top:814.49px;background:#3f2529"></i>
<i style="left:1299px;top:835.18px;background-image:radial-gradient(rgb(115,191,105) 10%,rgba(115,191,105,0.55))"></i>
<i style="left:1311px;top:835.18px;background:#2a392c"></i>
<i style="left:1323px;top:835.18px;background:#2b392b"></i>
<i style="left:1335px;top:835.18px;background:#2c392a"></i>
<i style="left:1347px;top:835.18px;background:#2e3a2a"></i>
<i style="left:1359px;top:835.18px;background:#2f3a29"></i>
<i style="left:1371px;top:835.18px;background:#303a29"></i>
<i style="left:1383px;top:835.18px;background:#323a28"></i>
<i style="left:1395px;top:835.18px;background:#333b28"></i>
<i style="left:1407px;top:835.18px;background:#343b27"></i>
<i style="left:1419px;top:835.18px;background:#353b27"></i>
<i style="left:1431px;top:835.18px;background:#363b26"></i>
<i style="left:1443px;top:835.18px;background:#373b26"></i>
<i style="left:1455px;top:835.18px;background:#383b25"></i>
<i style="left:1467px;top:835.18px;background:#393a25"></i>
<i style="left:1479px;top:835.18px;background:#3a3a25"></i>
<i style="left:1491px;top:835.18px;background:#3b3a25"></i>
<i style="left:1503px;top:835.18px;background:#3c3924"></i>
<i style="left:1515px;top:835.18px;background:#3c3924"></i>
<i style="left:1527px;top:835.18px;background:#3d3824"></i>
<i style="left:1539px;top:835.18px;background:#3e3724"></i>
<i style="left:1551px;top:835.18px;background:#3e3724"></i>
<i style="left:1563px;top:835.18px;background:#3e3625"></i>
<i style="left:1575px;top:835.18px;background:#3f3525"></i>
<i style="left:1587px;top:835.18px;background:#3f3425"></i>
<i style="left:1599px;top:835.18px;background:#3f3225"></i>
<i style="left:1611px;top:835.18px;background:#3f3126"></i>
<i style="left:1623px;top:835.18px;background:#3f3026"></i>
<i style="left:1635px;top:835.18px;background:#402f26"></i>
<i style="left:1647px;top:835.18px;background:#402d27"></i>
<i style="left:1659px;top:835.18px;background:#402c27"></i>
<i style="left:1671px;top:835.18px;background:#402b28"></i>
<i style="left:1683px;top:835.18px;background:#402928"></i>
<i style="left:1695px;top:835.18px;background:#3f2828"></i>
<i style="left:1707px;top:835.18px;background:#3f2629"></i>
<i style="left:1719px;top:835.18px;background:#3f2529"></i>
<i style="left:1299px;top:855.87px;background-image:radial-gradient(rgb(115,191,105) 10%,rgba(115,191,105,0.55))"></i>
<i style="left:1311px;top:855.87px;background:#2a392c"></i>
<i style="left:1323px;top:855.87px;background:#2b392b"></i>
<i style="left:1335px;top:855.87px;background:#2c392a"></i>
<i style="left:1347px;top:855.87px;background:#2e3a2a"></i>
<i style="left:1359px;top:855.87px;background:#2f3a29"></i>
<i style="left:1371px;top:855.87px;background:#303a29"></i>
<i style="left:1383px;top:855.87px;background:#323a28"></i>
<i style="left:1395px;top:855.87px;background:#333b28"></i>
<i style="left:1407px;top:855.87px;background:#343b27"></i>
<i style="left:1419px;top:855.87px;background:#353b27"></i>
<i style="left:1431px;top:855.87px;background:#363b26"></i>
<i style="left:1443px;top:855.87px;background:#373b26"></i>
<i style="left:1455px;top:855.87px;background:#383b25"></i>
<i style="left:1467px;top:855.87px;background:#393a25"></i>
<i style="left:1479px;top:855.87px;background:#3a3a25"></i>
<i style="left:1491px;top:855.87px;background:#3b3a25"></i>
<i style="left:1503px;top:855.87px;background:#3c3924"></i>
<i style="left:1515px;top:855.87px;background:#3c3924"></i>
<i style="left:1527px;top:855.87px;background:#3d3824"></i>
<i style="left:1539px;top:855.87px;background:#3e3724"></i>
<i style="left:1551px;top:855.87px;background:#3e3724"></i>
<i style="left:1563px;top:855.87px;background:#3e3625"></i>
<i style="left:1575px;top:855.87px;background:#3f3525"></i>
<i style="left:1587px;top:855.87px;background:#3f3425"></i>
<i style="left:1599px;top:855.87px;background:#3f3225"></i>
<i style="left:1611px;top:855.87px;background:#3f3126"></i>
<i style="left:1623px;top:855.87px;background:#3f3026"></i>
<i style="left:1635px;top:855.87px;background:#402f26"></i>
<i style="left:1647px;top:855.87px;background:#402d27"></i>
<i style="left:1659px;top:855.87px;background:#402c27"></i>
<i style="left:1671px;top:855.87px;background:#402b28"></i>
<i style="left:1683px;top:855.87px;background:#402928"></i>
<i style="left:1695px;top:855.87px;background:#3f2828"></i>
<i style="left:1707px;top:855.87px;background:#3f2629"></i>
<i style="left:1719px;top:855.87px;background:#3f2529"></i>
<i style="left:1299px;top:876.56px;background-image:radial-gradient(rgb(115,191,105) 10%,rgba(115,191,105,0.55))"></i>
<i style="left:1311px;top:876.56px;background:#2a392c"></i>
<i style="left:1323px;top:876.56px;background:#2b392b"></i>
<i style="left:1335px;top:876.56px;background:#2c392a"></i>
<i style="left:1347px;top:876.56px;background:#2e3a2a"></i>
<i style="left:1359px;top:876.56px;background:#2f3a29"></i>
<i style="left:1371px;top:876.56px;background:#303a29"></i>
<i style="left:1383px;top:876.56px;background:#323a28"></i>
<i style="left:1395px;top:876.56px;background:#333b28"></i>
<i style="left:1407px;top:876.56px;background:#343b27"></i>
<i style="left:1419px;top:876.56px;background:#353b27"></i>
<i style="left:1431px;top:876.56px;background:#363b26"></i>
<i style="left:1443px;top:876.56px;background:#373b26"></i>
<i style="left:1455px;top:876.56px;background:#383b25"></i>
<i style="left:1467px;top:876.56px;background:#393a25"></i>
<i style="left:1479px;top:876.56px;background:#3a3a25"></i>
<i style="left:1491px;top:876.56px;background:#3b3a25"></i>
<i style="left:1503px;top:876.56px;background:#3c3924"></i>
<i style="left:1515px;top:876.56px;background:#3c3924"></i>
<i style="left:1527px;top:876.56px;background:#3d3824"></i>
<i style="left:1539px;top:876.56px;background:#3e3724"></i>
<i style="left:1551px;top:876.56px;background:#3e3724"></i>
<i style="left:1563px;top:876.56px;background:#3e3625"></i>
<i style="left:1575px;top:876.56px;background:#3f3525"></i>
<i style="left:1587px;top:876.56px;background:#3f3425"></i>
<i style="left:1599px;top:876.56px;background:#3f3225"></i>
<i style="left:1611px;top:876.56px;background:#3f3126"></i>
<i style="left:1623px;top:876.56px;background:#3f3026"></i>
<i style="left:1635px;top:876.56px;background:#402f26"></i>
<i style="left:1647px;top:876.56px;background:#402d27"></i>
<i style="left:1659px;top:876.56px;background:#402c27"></i>
<i style="left:1671px;top:876.56px;background:#402b28"></i>
<i style="left:1683px;top:876.56px;background:#402928"></i>
<i style="left:1695px;top:876.56px;background:#3f2828"></i>
<i style="left:1707px;top:876.56px;background:#3f2629"></i>
<i style="left:1719px;top:876.56px;background:#3f2529"></i>
<i style="left:1299px;top:897.25px;background-image:radial-gradient(rgb(115,191,105) 10%,rgba(115,191,105,0.55))"></i>
<i style="left:1311px;top:897.25px;background-image:radial-gradient(rgb(122,193,102) 10%,rgba(122,193,102,0.55))"></i>
<i style="left:1323px;top:897.25px;background-image:radial-gradient(rgb(130,194,98) 10%,rgba(130,194,98,0.55))"></i>
<i style="left:1335px;top:897.25px;background-image:radial-gradient(rgb(137,196,95) 10%,rgba(137,196,95,0.55))"></i>
<i style="left:1347px;top:897.25px;background-image:radial-gradient(rgb(145,198,91) 10%,rgba(145,198,91,0.55))"></i>
<i style="left:1359px;top:897.25px;background-image:radial-gradient(rgb(152,199,88) 10%,rgba(152,199,88,0.55))"></i>
<i style="left:1371px;top:897.25px;background-image:radial-gradient(rgb(159,200,85) 10%,rgba(159,200,85,0.55))"></i>
<i style="left:1383px;top:897.25px;background-image:radial-gradient(rgb(166,201,82) 10%,rgba(166,201,82,0.55))"></i>
<i style="left:1395px;top:897.25px;background-image:radial-gradient(rgb(173,202,79) 10%,rgba(173,202,79,0.55))"></i>
<i style="left:1407px;top:897.25px;background-image:radial-gradient(rgb(180,203,76) 10%,rgba(180,203,76,0.55))"></i>
<i style="left:1419px;top:897.25px;background-image:radial-gradient(rgb(186,203,73) 10%,rgba(186,203,73,0.55))"></i>
<i style="left:1431px;top:897.25px;background-image:radial-gradient(rgb(192,203,71) 10%,rgba(192,203,71,0.55))"></i>
<i style="left:1443px;top:897.25px;background-image:radial-gradient(rgb(198,203,69) 10%,rgba(198,203,69,0.55))"></i>
<i style="left:1455px;top:897.25px;background-image:radial-gradient(rgb(204,202,67) 10%,rgba(204,202,67,0.55))"></i>
<i style="left:1467px;top:897.25px;background-image:radial-gradient(rgb(209,201,65) 10%,rgba(209,201,65,0.55))"></i>
<i style="left:1479px;top:897.25px;background-image:radial-gradient(rgb(214,199,63) 10%,rgba(214,199,63,0.55))"></i>
<i style="left:1491px;top:897.25px;background-image:radial-gradient(rgb(218,197,62) 10%,rgba(218,197,62,0.55))"></i>
<i style="left:1503px;top:897.25px;background:#3c3924"></i>
<i style="left:1515px;top:897.25px;background:#3c3924"></i>
<i style="left:1527px;top:897.25px;background:#3d3824"></i>
<i style="left:1539px;top:897.25px;background:#3e3724"></i>
<i style="left:1551px;top:897.25px;background:#3e3724"></i>
<i style="left:1563px;top:897.25px;background:#3e3625"></i>
<i style="left:1575px;top:897.25px;background:#3f3525"></i>
<i style="left:1587px;top:897.25px;background:#3f3425"></i>
<i style="left:1599px;top:897.25px;background:#3f3225"></i>
<i style="left:1611px;top:897.25px;background:#3f3126"></i>
<i style="left:1623px;top:897.25px;background:#3f3026"></i>
<i style="left:1635px;top:897.25px;background:#402f26"></i>
<i style="left:1647px;top:897.25px;background:#402d27"></i>
<i style="left:1659px;top:897.25px;background:#402c27"></i>
<i style="left:1671px;top:897.25px;background:#402b28"></i>
<i style="left:1683px;top:897.25px;background:#402928"></i>
<i style="left:1695px;top:897.25px;background:#3f2828"></i>
<i style="left:1707px;top:897.25px;background:#3f2629"></i>
<i style="left:1719px;top:897.25px;background:#3f2529"></i>
<i style="left:1299px;top:917.94px;background-image:radial-gradient(rgb(115,191,105) 10%,rgba(115,191,105,0.55))"></i>
<i style="left:1311px;top:917.94px;background:#2a392c"></i>
<i style="left:1323px;top:917.94px;background:#2b392b"></i>
<i style="left:1335px;top:917.94px;background:#2c392a"></i>
<i style="left:1347px;top:917.94px;background:#2e3a2a"></i>
<i style="left:1359px;top:917.94px;background:#2f3a29"></i>
<i style="left:1371px;top:917.94px;background:#303a29"></i>
<i style="left:1383px;top:917.94px;background:#323a28"></i>
<i style="left:1395px;top:917.94px;background:#333b28"></i>
<i style="left:1407px;top:917.94px;background:#343b27"></i>
<i style="left:1419px;top:917.94px;background:#353b27"></i>
<i style="left:1431px;top:917.94px;background:#363b26"></i>
<i style="left:1443px;top:917.94px;background:#373b26"></i>
<i style="left:1455px;top:917.94px;background:#383b25"></i>
<i style="left:1467px;top:917.94px;background:#393a25"></i>
<i style="left:1479px;top:917.94px;background:#3a3a25"></i>
<i style="left:1491px;top:917.94px;background:#3b3a25"></i>
<i style="left:1503px;top:917.94px;background:#3c3924"></i>
<i style="left:1515px;top:917.94px;background:#3c3924"></i>
<i style="left:1527px;top:917.94px;background:#3d3824"></i>
<i style="left:1539px;top:917.94px;background:#3e3724"></i>
<i style="left:1551px;top:917.94px;background:#3e3724"></i>
<i style="left:1563px;top:917.94px;background:#3e3625"></i>
<i style="left:1575px;top:917.94px;background:#3f3525"></i>
<i style="left:1587px;top:917.94px;background:#3f3425"></i>
<i style="left:1599px;top:917.94px;background:#3f3225"></i>
<i style="left:1611px;top:917.94px;background:#3f3126"></i>
<i style="left:1623px;top:917.94px;background:#3f3026"></i>
<i style="left:1635px;top:917.94px;background:#402f26"></i>
<i style="left:1647px;top:917.94px;background:#402d27"></i>
<i style="left:1659px;top:917.94px;background:#402c27"></i>
<i style="left:1671px;top:917.94px;background:#402b28"></i>
<i style="left:1683px;top:917.94px;background:#402928"></i>
<i style="left:1695px;top:917.94px;background:#3f2828"></i>
<i style="left:1707px;top:917.94px;background:#3f2629"></i>
<i style="left:1719px;top:917.94px;background:#3f2529"></i>
<i style="left:1299px;top:938.63px;background-image:radial-gradient(rgb(115,191,105) 10%,rgba(115,191,105,0.55))"></i>
<i style="left:1311px;top:938.63px;background:#2a392c"></i>
<i style="left:1323px;top:938.63px;background:#2b392b"></i>
<i style="left:1335px;top:938.63px;background:#2c392a"></i>
<i style="left:1347px;top:938.63px;background:#2e3a2a"></i>
<i style="left:1359px;top:938.63px;background:#2f3a29"></i>
<i style="left:1371px;top:938.63px;background:#303a29"></i>
<i style="left:1383px;top:938.63px;background:#323a28"></i>
<i style="left:1395px;top:938.63px;background:#333b28"></i>
<i style="left:1407px;top:938.63px;background:#343b27"></i>
<i style="left:1419px;top:938.63px;background:#353b27"></i>
<i style="left:1431px;top:938.63px;background:#363b26"></i>
<i style="left:1443px;top:938.63px;background:#373b26"></i>
<i style="left:1455px;top:938.63px;background:#383b25"></i>
<i style="left:1467px;top:938.63px;background:#393a25"></i>
<i style="left:1479px;top:938.63px;background:#3a3a25"></i>
<i style="left:1491px;top:938.63px;background:#3b3a25"></i>
<i style="left:1503px;top:938.63px;background:#3c3924"></i>
<i style="left:1515px;top:938.63px;background:#3c3924"></i>
<i style="left:1527px;top:938.63px;background:#3d3824"></i>
<i style="left:1539px;top:938.63px;background:#3e3724"></i>
<i style="left:1551px;top:938.63px;background:#3e3724"></i>
<i style="left:1563px;top:938.63px;background:#3e3625"></i>
<i style="left:1575px;top:938.63px;background:#3f3525"></i>
<i style="left:1587px;top:938.63px;background:#3f3425"></i>
<i style="left:1599px;top:938.63px;background:#3f3225"></i>
<i style="left:1611px;top:938.63px;background:#3f3126"></i>
<i style="left:1623px;top:938.63px;background:#3f3026"></i>
<i style="left:1635px;top:938.63px;background:#402f26"></i>
<i style="left:1647px;top:938.63px;background:#402d27"></i>
<i style="left:1659px;top:938.63px;background:#402c27"></i>
<i style="left:1671px;top:938.63px;background:#402b28"></i>
<i style="left:1683px;top:938.63px;background:#402928"></i>
<i style="left:1695px;top:938.63px;background:#3f2828"></i>
<i style="left:1707px;top:938.63px;background:#3f2629"></i>
<i style="left:1719px;top:938.63px;background:#3f2529"></i>
<i style="left:1299px;top:959.32px;background-image:radial-gradient(rgb(115,191,105) 10%,rgba(115,191,105,0.55))"></i>
<i style="left:1311px;top:959.32px;background:#2a392c"></i>
<i style="left:1323px;top:959.32px;background:#2b392b"></i>
<i style="left:1335px;top:959.32px;background:#2c392a"></i>
<i style="left:1347px;top:959.32px;background:#2e3a2a"></i>
<i style="left:1359px;top:959.32px;background:#2f3a29"></i>
<i style="left:1371px;top:959.32px;background:#303a29"></i>
<i style="left:1383px;top:959.32px;background:#323a28"></i>
<i style="left:1395px;top:959.32px;background:#333b28"></i>
<i style="left:1407px;top:959.32px;background:#343b27"></i>
<i style="left:1419px;top:959.32px;background:#353b27"></i>
<i style="left:1431px;top:959.32px;background:#363b26"></i>
<i style="left:1443px;top:959.32px;background:#373b26"></i>
<i style="left:1455px;top:959.32px;background:#383b25"></i>
<i style="left:1467px;top:959.32px;background:#393a25"></i>
<i style="left:1479px;top:959.32px;background:#3a3a25"></i>
<i style="left:1491px;top:959.32px;background:#3b3a25"></i>
<i style="left:1503px;top:959.32px;background:#3c3924"></i>
<i style="left:1515px;top:959.32px;background:#3c3924"></i>
<i style="left:1527px;top:959.32px;background:#3d3824"></i>
<i style="left:1539px;top:959.32px;background:#3e3724"></i>
<i style="left:1551px;top:959.32px;background:#3e3724"></i>
<i style="left:1563px;top:959.32px;background:#3e3625"></i>
<i style="left:1575px;top:959.32px;background:#3f3525"></i>
<i style="left:1587px;top:959.32px;background:#3f3425"></i>
<i style="left:1599px;top:959.32px;background:#3f3225"></i>
<i style="left:1611px;top:959.32px;background:#3f3126"></i>
<i style="left:1623px;top:959.32px;background:#3f3026"></i>
<i style="left:1635px;top:959.32px;background:#402f26"></i>
<i style="left:1647px;top:959.32px;background:#402d27"></i>
<i style="left:1659px;top:959.32px;background:#402c27"></i>
<i style="left:1671px;top:959.32px;background:#402b28"></i>
<i style="left:1683px;top:959.32px;background:#402928"></i>
<i style="left:1695px;top:959.32px;background:#3f2828"></i>
<i style="left:1707px;top:959.32px;background:#3f2629"></i>
<i style="left:1719px;top:959.32px;background:#3f2529"></i>
<i style="left:1299px;top:980.01px;background-image:radial-gradient(rgb(115,191,105) 10%,rgba(115,191,105,0.55))"></i>
<i style="left:1311px;top:980.01px;background:#2a392c"></i>
<i style="left:1323px;top:980.01px;background:#2b392b"></i>
<i style="left:1335px;top:980.01px;background:#2c392a"></i>
<i style="left:1347px;top:980.01px;background:#2e3a2a"></i>
<i style="left:1359px;top:980.01px;background:#2f3a29"></i>
<i style="left:1371px;top:980.01px;background:#303a29"></i>
<i style="left:1383px;top:980.01px;background:#323a28"></i>
<i style="left:1395px;top:980.01px;background:#333b28"></i>
<i style="left:1407px;top:980.01px;background:#343b27"></i>
<i style="left:1419px;top:980.01px;background:#353b27"></i>
<i style="left:1431px;top:980.01px;background:#363b26"></i>
<i style="left:1443px;top:980.01px;background:#373b26"></i>
<i style="left:1455px;top:980.01px;background:#383b25"></i>
<i style="left:1467px;top:980.01px;background:#393a25"></i>
<i style="left:1479px;top:980.01px;background:#3a3a25"></i>
<i style="left:1491px;top:980.01px;background:#3b3a25"></i>
<i style="left:1503px;top:980.01px;background:#3c3924"></i>
<i style="left:1515px;top:980.01px;background:#3c3924"></i>
<i style="left:1527px;top:980.01px;background:#3d3824"></i>
<i style="left:1539px;top:980.01px;background:#3e3724"></i>
<i style="left:1551px;top:980.01px;background:#3e3724"></i>
<i style="left:1563px;top:980.01px;background:#3e3625"></i>
<i style="left:1575px;top:980.01px;background:#3f3525"></i>
<i style="left:1587px;top:980.01px;background:#3f3425"></i>
<i style="left:1599px;top:980.01px;background:#3f3225"></i>
<i style="left:1611px;top:980.01px;background:#3f3126"></i>
<i style="left:1623px;top:980.01px;background:#3f3026"></i>
<i style="left:1635px;top:980.01px;background:#402f26"></i>
<i style="left:1647px;top:980.01px;background:#402d27"></i>
<i style="left:1659px;top:980.01px;background:#402c27"></i>
<i style="left:1671px;top:980.01px;background:#402b28"></i>
<i style="left:1683px;top:980.01px;background:#402928"></i>
<i style="left:1695px;top:980.01px;background:#3f2828"></i>
<i style="left:1707px;top:980.01px;background:#3f2629"></i>
<i style="left:1719px;top:980.01px;background:#3f2529"></i>
<i style="left:1299px;top:1000.70px;background-image:radial-gradient(rgb(115,191,105) 10%,rgba(115,191,105,0.55))"></i>
<i style="left:1311px;top:1000.70px;background:#2a392c"></i>
<i style="left:1323px;top:1000.70px;background:#2b392b"></i>
<i style="left:1335px;top:1000.70px;background:#2c392a"></i>
<i style="left:1347px;top:1000.70px;background:#2e3a2a"></i>
<i style="left:1359px;top:1000.70px;background:#2f3a29"></i>
<i style="left:1371px;top:1000.70px;background:#303a29"></i>
<i style="left:1383px;top:1000.70px;background:#323a28"></i>
<i style="left:1395px;top:1000.70px;background:#333b28"></i>
<i style="left:1407px;top:1000.70px;background:#343b27"></i>
<i style="left:1419px;top:1000.70px;background:#353b27"></i>
<i style="left:1431px;top:1000.70px;background:#363b26"></i>
<i style="left:1443px;top:1000.70px;background:#373b26"></i>
<i style="left:1455px;top:1000.70px;background:#383b25"></i>
<i style="left:1467px;top:1000.70px;background:#393a25"></i>
<i style="left:1479px;top:1000.70px;background:#3a3a25"></i>
<i style="left:1491px;top:1000.70px;background:#3b3a25"></i>
<i style="left:1503px;top:1000.70px;background:#3c3924"></i>
<i style="left:1515px;top:1000.70px;background:#3c3924"></i>
<i style="left:1527px;top:1000.70px;background:#3d3824"></i>
<i style="left:1539px;top:1000.70px;background:#3e3724"></i>
<i style="left:1551px;top:1000.70px;background:#3e3724"></i>
<i style="left:1563px;top:1000.70px;background:#3e3625"></i>
<i style="left:1575px;top:1000.70px;background:#3f3525"></i>
<i style="left:1587px;top:1000.70px;background:#3f3425"></i>
<i style="left:1599px;top:1000.70px;background:#3f3225"></i>
<i style="left:1611px;top:1000.70px;background:#3f3126"></i>
<i style="left:1623px;top:1000.70px;background:#3f3026"></i>
<i style="left:1635px;top:1000.70px;background:#402f26"></i>
<i style="left:1647px;top:1000.70px;background:#402d27"></i>
<i style="left:1659px;top:1000.70px;background:#402c27"></i>
<i style="left:1671px;top:1000.70px;background:#402b28"></i>
<i style="left:1683px;top:1000.70px;background:#402928"></i>
<i style="left:1695px;top:1000.70px;background:#3f2828"></i>
<i style="left:1707px;top:1000.70px;background:#3f2629"></i>
<i style="left:1719px;top:1000.70px;background:#3f2529"></i>
<i style="left:1299px;top:1021.39px;background-image:radial-gradient(rgb(115,191,105) 10%,rgba(115,191,105,0.55))"></i>
<i style="left:1311px;top:1021.39px;background:#2a392c"></i>
<i style="left:1323px;top:1021.39px;background:#2b392b"></i>
<i style="left:1335px;top:1021.39px;background:#2c392a"></i>
<i style="left:1347px;top:1021.39px;background:#2e3a2a"></i>
<i style="left:1359px;top:1021.39px;background:#2f3a29"></i>
<i style="left:1371px;top:1021.39px;background:#303a29"></i>
<i style="left:1383px;top:1021.39px;background:#323a28"></i>
<i style="left:1395px;top:1021.39px;background:#333b28"></i>
<i style="left:1407px;top:1021.39px;background:#343b27"></i>
<i style="left:1419px;top:1021.39px;background:#353b27"></i>
<i style="left:1431px;top:1021.39px;background:#363b26"></i>
<i style="left:1443px;top:1021.39px;background:#373b26"></i>
<i style="left:1455px;top:1021.39px;background:#383b25"></i>
<i style="left:1467px;top:1021.39px;background:#393a25"></i>
<i style="left:1479px;top:1021.39px;background:#3a3a25"></i>
<i style="left:1491px;top:1021.39px;background:#3b3a25"></i>
<i style="left:1503px;top:1021.39px;background:#3c3924"></i>
<i style="left:1515px;top:1021.39px;background:#3c3924"></i>
<i style="left:1527px;top:1021.39px;background:#3d3824"></i>
<i style="left:1539px;top:1021.39px;background:#3e3724"></i>
<i style="left:1551px;top:1021.39px;background:#3e3724"></i>
<i style="left:1563px;top:1021.39px;background:#3e3625"></i>
<i style="left:1575px;top:1021.39px;background:#3f3525"></i>
<i style="left:1587px;top:1021.39px;background:#3f3425"></i>
<i style="left:1599px;top:1021.39px;background:#3f3225"></i>
<i style="left:1611px;top:1021.39px;background:#3f3126"></i>
<i style="left:1623px;top:1021.39px;background:#3f3026"></i>
<i style="left:1635px;top:1021.39px;background:#402f26"></i>
<i style="left:1647px;top:1021.39px;background:#402d27"></i>
<i style="left:1659px;top:1021.39px;background:#402c27"></i>
<i style="left:1671px;top:1021.39px;background:#402b28"></i>
<i style="left:1683px;top:1021.39px;background:#402928"></i>
<i style="left:1695px;top:1021.39px;background:#3f2828"></i>
<i style="left:1707px;top:1021.39px;background:#3f2629"></i>
<i style="left:1719px;top:1021.39px;background:#3f2529"></i>
</div>
<span class="t" style="font-size:12.76px;color:#ccccdc;top:797.00px;letter-spacing:1.078px;-webkit-text-stroke:0.18px;right:615.42px;">/**</span>
<span class="t" style="font-size:19.45px;color:#73bf69;top:793.00px;letter-spacing:-0.732px;-webkit-text-stroke:0.18px;left:1741.55px;">0 s</span>
<span class="t" style="font-size:12.76px;color:#ccccdc;top:817.00px;letter-spacing:0.287px;-webkit-text-stroke:0.18px;right:616.21px;">/auth/kakao/login</span>
<span class="t" style="font-size:19.45px;color:#73bf69;top:814.00px;letter-spacing:-0.732px;-webkit-text-stroke:0.18px;left:1741.55px;">0 s</span>
<span class="t" style="font-size:12.76px;color:#ccccdc;top:838.00px;letter-spacing:0.340px;-webkit-text-stroke:0.18px;right:616.16px;">/auth/kakao/login-url</span>
<span class="t" style="font-size:19.45px;color:#73bf69;top:834.00px;letter-spacing:-0.732px;-webkit-text-stroke:0.18px;left:1741.55px;">0 s</span>
<span class="t" style="font-size:12.76px;color:#ccccdc;top:859.00px;letter-spacing:0.313px;-webkit-text-stroke:0.18px;right:616.19px;">/auth/me</span>
<span class="t" style="font-size:19.45px;color:#73bf69;top:855.00px;letter-spacing:-0.732px;-webkit-text-stroke:0.18px;left:1741.55px;">0 s</span>
<span class="t" style="font-size:12.76px;color:#ccccdc;top:879.00px;letter-spacing:0.306px;-webkit-text-stroke:0.18px;right:616.19px;">/auth/token/refresh</span>
<span class="t" style="font-size:19.45px;color:#73bf69;top:876.00px;letter-spacing:-0.732px;-webkit-text-stroke:0.18px;left:1741.55px;">0 s</span>
<span class="t" style="font-size:12.76px;color:#ccccdc;top:900.00px;letter-spacing:0.337px;-webkit-text-stroke:0.18px;right:616.16px;">/order/clubs</span>
<span class="t" style="font-size:19.45px;color:#dec33d;top:897.00px;letter-spacing:-0.246px;-webkit-text-stroke:0.18px;left:1741.60px;">264 µs</span>
<span class="t" style="font-size:12.76px;color:#ccccdc;top:921.00px;letter-spacing:0.272px;-webkit-text-stroke:0.18px;right:616.23px;">/order/matches</span>
<span class="t" style="font-size:19.45px;color:#73bf69;top:917.00px;letter-spacing:-0.732px;-webkit-text-stroke:0.18px;left:1741.55px;">0 s</span>
<span class="t" style="font-size:12.76px;color:#ccccdc;top:942.00px;letter-spacing:0.327px;-webkit-text-stroke:0.18px;right:616.17px;">/order/matches/{matchId}</span>
<span class="t" style="font-size:19.45px;color:#73bf69;top:938.00px;letter-spacing:-0.732px;-webkit-text-stroke:0.18px;left:1741.55px;">0 s</span>
<span class="t" style="font-size:12.76px;color:#ccccdc;top:962.00px;letter-spacing:0.323px;-webkit-text-stroke:0.18px;right:616.18px;">/queue/matches/{matchId}/enter</span>
<span class="t" style="font-size:19.45px;color:#73bf69;top:959.00px;letter-spacing:-0.732px;-webkit-text-stroke:0.18px;left:1741.55px;">0 s</span>
<span class="t" style="font-size:12.76px;color:#ccccdc;top:983.00px;letter-spacing:0.318px;-webkit-text-stroke:0.18px;right:616.18px;">/queue/matches/{matchId}/status</span>
<span class="t" style="font-size:19.45px;color:#73bf69;top:979.00px;letter-spacing:-0.732px;-webkit-text-stroke:0.18px;left:1741.55px;">0 s</span>
<span class="t" style="font-size:12.76px;color:#ccccdc;top:1004.00px;letter-spacing:0.349px;-webkit-text-stroke:0.18px;right:616.15px;">/seat/matches/{matchId}/booking-options</span>
<span class="t" style="font-size:19.45px;color:#73bf69;top:1000.00px;letter-spacing:-0.732px;-webkit-text-stroke:0.18px;left:1741.55px;">0 s</span>
<span class="t" style="font-size:12.76px;color:#ccccdc;top:1025.00px;letter-spacing:0.338px;-webkit-text-stroke:0.18px;right:616.16px;">/seat/matches/{matchId}/recommendations/seat-en...</span>
<span class="t" style="font-size:19.45px;color:#73bf69;top:1021.00px;letter-spacing:-0.732px;-webkit-text-stroke:0.18px;left:1741.55px;">0 s</span>
<div class="panel" style="left:16px;top:1095px;width:933px;height:296px;"></div>
<h2 class="t" style="font-size:14.22px;color:#ccccdc;top:1105.00px;-webkit-text-stroke:0.50px;left:25.20px;"><span style="font-size:13.16px;letter-spacing:-0.910px;margin-right:0.73px;position:relative;top:-1.19px">에러율</span><span style="letter-spacing:-0.219px"> </span><span style="font-size:13.16px;letter-spacing:-0.910px;margin-right:0.73px;position:relative;top:-1.19px">추이</span></h2>
<svg style="position:absolute;left:105.90px;top:1104.00px;" width="16.00" height="16.00" viewBox="0 0 16.00 16.00"><circle cx="8" cy="8" r="6.2" fill="none" stroke="#9a9ba6" stroke-width="1.2"/><path d="M8 7.9 V10.6" stroke="#9a9ba6" stroke-width="1.3" stroke-linecap="round"/><circle cx="8" cy="5.5" r="0.8" fill="#9a9ba6"/></svg>
<svg style="position:absolute;left:0.00px;top:0.00px;pointer-events:none;" width="1905.00" height="1407.00" viewBox="0 0 1905.00 1407.00"><defs><linearGradient id="gr" gradientUnits="userSpaceOnUse" x1="0" y1="1148" x2="0" y2="1289"><stop offset="0" stop-color="#f2495c" stop-opacity="0.16"/><stop offset="1" stop-color="#f2495c" stop-opacity="0.0"/></linearGradient></defs><path d="M64.0 1148.5 H933.0" stroke="#2b2f33" stroke-width="1"/><path d="M64.0 1168.5 H933.0" stroke="#2b2f33" stroke-width="1"/><path d="M64.0 1188.5 H933.0" stroke="#2b2f33" stroke-width="1"/><path d="M64.0 1208.5 H933.0" stroke="#2b2f33" stroke-width="1"/><path d="M64.0 1229.5 H933.0" stroke="#2b2f33" stroke-width="1"/><path d="M64.0 1249.5 H933.0" stroke="#2b2f33" stroke-width="1"/><path d="M64.0 1269.5 H933.0" stroke="#2b2f33" stroke-width="1"/><path d="M64.0 1289.5 H933.0" stroke="#2b2f33" stroke-width="1"/><path d="M298.5 1144.5 V1293.0" stroke="#2b2f33" stroke-width="1"/><path d="M587.5 1144.5 V1293.0" stroke="#2b2f33" stroke-width="1"/><path d="M877.5 1144.5 V1293.0" stroke="#2b2f33" stroke-width="1"/><path d="M62.90 1289.00C117.43 1289.00 171.97 1289.00 226.50 1289.00C231.33 1289.00 236.17 1289.00 241.00 1289.00C245.83 1289.00 250.67 1237.28 255.50 1236.36C260.33 1235.45 265.17 1234.96 270.00 1234.96C274.80 1234.96 279.60 1235.76 284.40 1237.17C289.23 1238.59 294.07 1289.00 298.90 1289.00C303.73 1289.00 308.57 1289.00 313.40 1289.00C318.23 1289.00 323.07 1249.50 327.90 1233.55C332.70 1217.72 337.50 1203.92 342.30 1191.76C347.13 1179.53 351.97 1159.22 356.80 1159.22C361.63 1159.22 366.47 1207.21 371.30 1228.73C376.13 1250.25 380.97 1289.00 385.80 1289.00C390.53 1289.00 395.27 1289.00 400.00 1289.00C573.33 1289.00 746.67 1289.00 920.00 1289.00Z" fill="url(#gr)"/><path d="M62.90 1289.00C117.43 1289.00 171.97 1289.00 226.50 1289.00C231.33 1289.00 236.17 1289.00 241.00 1289.00C245.83 1289.00 250.67 1237.28 255.50 1236.36C260.33 1235.45 265.17 1234.96 270.00 1234.96C274.80 1234.96 279.60 1235.76 284.40 1237.17C289.23 1238.59 294.07 1289.00 298.90 1289.00C303.73 1289.00 308.57 1289.00 313.40 1289.00C318.23 1289.00 323.07 1249.50 327.90 1233.55C332.70 1217.72 337.50 1203.92 342.30 1191.76C347.13 1179.53 351.97 1159.22 356.80 1159.22C361.63 1159.22 366.47 1207.21 371.30 1228.73C376.13 1250.25 380.97 1289.00 385.80 1289.00C390.53 1289.00 395.27 1289.00 400.00 1289.00C573.33 1289.00 746.67 1289.00 920.00 1289.00" fill="none" stroke="#f2495c" stroke-width="2" stroke-linejoin="round"/><path d="M62.9 1289 H920" stroke="#ff9830" stroke-width="2"/></svg>
<span class="t" style="font-size:12.48px;color:#ccccdc;top:1143.00px;letter-spacing:0.266px;-webkit-text-stroke:0.18px;right:1846.73px;">3.5%</span>
<span class="t" style="font-size:12.48px;color:#ccccdc;top:1163.00px;letter-spacing:0.578px;-webkit-text-stroke:0.18px;right:1846.42px;">3%</span>
<span class="t" style="font-size:12.48px;color:#ccccdc;top:1183.00px;letter-spacing:0.310px;-webkit-text-stroke:0.18px;right:1846.69px;">2.5%</span>
<span class="t" style="font-size:12.48px;color:#ccccdc;top:1203.00px;letter-spacing:0.532px;-webkit-text-stroke:0.18px;right:1846.47px;">2%</span>
<span class="t" style="font-size:12.48px;color:#ccccdc;top:1223.00px;letter-spacing:-0.300px;-webkit-text-stroke:0.18px;right:1847.30px;">1.5%</span>
<span class="t" style="font-size:12.48px;color:#ccccdc;top:1243.00px;letter-spacing:-0.687px;-webkit-text-stroke:0.18px;right:1847.69px;">1%</span>
<span class="t" style="font-size:12.48px;color:#ccccdc;top:1263.00px;letter-spacing:0.297px;-webkit-text-stroke:0.18px;right:1846.70px;">0.5%</span>
<span class="t" style="font-size:12.48px;color:#ccccdc;top:1283.00px;letter-spacing:0.658px;-webkit-text-stroke:0.18px;right:1846.34px;">0%</span>
<span class="t" style="font-size:12.48px;color:#ccccdc;top:1298.00px;letter-spacing:-0.141px;-webkit-text-stroke:0.18px;left:297.70px;transform:translateX(-50%);margin-left:-0.07px;">20:15</span>
<span class="t" style="font-size:12.48px;color:#ccccdc;top:1298.00px;letter-spacing:0.402px;-webkit-text-stroke:0.18px;left:586.70px;transform:translateX(-50%);margin-left:0.20px;">20:20</span>
<span class="t" style="font-size:12.48px;color:#ccccdc;top:1298.00px;letter-spacing:0.347px;-webkit-text-stroke:0.18px;left:876.20px;transform:translateX(-50%);margin-left:0.17px;">20:25</span>
<span class="t" style="font-size:12.11px;color:#6e9fff;top:1315.00px;letter-spacing:0.325px;-webkit-text-stroke:0.50px;left:55.40px;">Name</span>
<span class="t" style="font-size:12.11px;color:#6e9fff;top:1315.00px;letter-spacing:0.467px;-webkit-text-stroke:0.50px;right:1108.13px;">Mean</span>
<span class="t" style="font-size:12.11px;color:#6e9fff;top:1315.00px;letter-spacing:0.527px;-webkit-text-stroke:0.50px;right:1045.07px;">Max</span>
<span class="t" style="font-size:12.11px;color:#6e9fff;top:1315.00px;letter-spacing:0.439px;-webkit-text-stroke:0.50px;right:973.06px;">Last *</span>
<div style="position:absolute;left:25.00px;top:1333.20px;width:915.00px;height:1.00px;background:#2c2e34;"></div>
<div style="position:absolute;left:25.00px;top:1356.90px;width:915.00px;height:1.00px;background:#2c2e34;"></div>
<div style="position:absolute;left:25.00px;top:1380.60px;width:915.00px;height:1.00px;background:#2c2e34;"></div>
<div style="position:absolute;left:33.00px;top:1343.40px;width:14.00px;height:4.00px;background:#f2495c;border-radius:2px;"></div>
<span class="t" style="font-size:12.48px;color:#ccccdc;top:1339.00px;-webkit-text-stroke:0.18px;left:55.40px;"><span style="letter-spacing:0.221px">5xx </span><span style="font-size:11.28px;letter-spacing:-0.780px;margin-right:0.62px;position:relative;top:-1.02px">에러율</span></span>
<span class="t" style="font-size:12.48px;color:#ccccdc;top:1339.00px;letter-spacing:0.414px;-webkit-text-stroke:0.18px;right:1108.19px;">0.203%</span>
<span class="t" style="font-size:12.48px;color:#ccccdc;top:1339.00px;letter-spacing:0.345px;-webkit-text-stroke:0.18px;right:1046.25px;">3.23%</span>
<span class="t" style="font-size:12.48px;color:#ccccdc;top:1339.00px;letter-spacing:0.658px;-webkit-text-stroke:0.18px;right:972.84px;">0%</span>
<div style="position:absolute;left:33.00px;top:1367.10px;width:14.00px;height:4.00px;background:#ff9830;border-radius:2px;"></div>
<span class="t" style="font-size:12.48px;color:#ccccdc;top:1363.00px;-webkit-text-stroke:0.18px;left:55.40px;"><span style="letter-spacing:0.335px">4xx </span><span style="font-size:11.28px;letter-spacing:-0.780px;margin-right:0.62px;position:relative;top:-1.02px">에러율</span></span>
<span class="t" style="font-size:12.48px;color:#ccccdc;top:1363.00px;letter-spacing:0.658px;-webkit-text-stroke:0.18px;right:1107.94px;">0%</span>
<span class="t" style="font-size:12.48px;color:#ccccdc;top:1363.00px;letter-spacing:0.658px;-webkit-text-stroke:0.18px;right:1045.94px;">0%</span>
<span class="t" style="font-size:12.48px;color:#ccccdc;top:1363.00px;letter-spacing:0.658px;-webkit-text-stroke:0.18px;right:972.84px;">0%</span>
<div class="panel" style="left:964px;top:1095px;width:933px;height:296px;"></div>
<h2 class="t" style="font-size:14.22px;color:#ccccdc;top:1105.00px;-webkit-text-stroke:0.50px;left:973.20px;"><span style="letter-spacing:0.476px">5xx </span><span style="font-size:13.16px;letter-spacing:-0.910px;margin-right:0.73px;position:relative;top:-1.19px">에러</span><span style="letter-spacing:-0.219px"> </span><span style="font-size:13.16px;letter-spacing:-0.910px;margin-right:0.73px;position:relative;top:-1.19px">경로</span><span style="letter-spacing:-0.206px"> TOP 10</span></h2>
<svg style="position:absolute;left:1122.00px;top:1104.00px;" width="16.00" height="16.00" viewBox="0 0 16.00 16.00"><circle cx="8" cy="8" r="6.2" fill="none" stroke="#9a9ba6" stroke-width="1.2"/><path d="M8 7.9 V10.6" stroke="#9a9ba6" stroke-width="1.3" stroke-linecap="round"/><circle cx="8" cy="5.5" r="0.8" fill="#9a9ba6"/></svg>
<svg style="position:absolute;left:0.00px;top:0.00px;pointer-events:none;" width="1905.00" height="1407.00" viewBox="0 0 1905.00 1407.00"><path d="M1053.5 1144.0 V1364.7" stroke="#2b2f33" stroke-width="1"/><path d="M1115.5 1144.0 V1364.7" stroke="#2b2f33" stroke-width="1"/><path d="M1178.5 1144.0 V1364.7" stroke="#2b2f33" stroke-width="1"/><path d="M1241.5 1144.0 V1364.7" stroke="#2b2f33" stroke-width="1"/><path d="M1304.5 1144.0 V1364.7" stroke="#2b2f33" stroke-width="1"/><path d="M1366.5 1144.0 V1364.7" stroke="#2b2f33" stroke-width="1"/><path d="M1429.5 1144.0 V1364.7" stroke="#2b2f33" stroke-width="1"/><path d="M1492.5 1144.0 V1364.7" stroke="#2b2f33" stroke-width="1"/><path d="M1554.5 1144.0 V1364.7" stroke="#2b2f33" stroke-width="1"/><path d="M1617.5 1144.0 V1364.7" stroke="#2b2f33" stroke-width="1"/><path d="M1680.5 1144.0 V1364.7" stroke="#2b2f33" stroke-width="1"/><path d="M1742.5 1144.0 V1364.7" stroke="#2b2f33" stroke-width="1"/><path d="M1805.5 1144.0 V1364.7" stroke="#2b2f33" stroke-width="1"/><path d="M1868.5 1144.0 V1364.7" stroke="#2b2f33" stroke-width="1"/><rect x="1053.5" y="1145.5" width="412.8" height="194" fill="#c93f55" stroke="#f2495c" stroke-width="1"/><path d="M1115.7 1146 V1339" stroke="#ffffff" stroke-opacity="0.05" stroke-width="1"/><path d="M1178.4 1146 V1339" stroke="#ffffff" stroke-opacity="0.05" stroke-width="1"/><path d="M1241.1 1146 V1339" stroke="#ffffff" stroke-opacity="0.05" stroke-width="1"/><path d="M1303.8 1146 V1339" stroke="#ffffff" stroke-opacity="0.05" stroke-width="1"/><path d="M1366.5 1146 V1339" stroke="#ffffff" stroke-opacity="0.05" stroke-width="1"/><path d="M1429.2 1146 V1339" stroke="#ffffff" stroke-opacity="0.05" stroke-width="1"/></svg>
<span class="t" style="font-size:12.48px;color:#ccccdc;top:1370.00px;letter-spacing:0.631px;-webkit-text-stroke:0.18px;left:1053.00px;transform:translateX(-50%);margin-left:0.32px;">0</span>
<span class="t" style="font-size:12.48px;color:#ccccdc;top:1370.00px;letter-spacing:0.168px;-webkit-text-stroke:0.18px;left:1115.70px;transform:translateX(-50%);margin-left:0.08px;">0.5</span>
<span class="t" style="font-size:12.48px;color:#ccccdc;top:1370.00px;letter-spacing:-2.059px;-webkit-text-stroke:0.18px;left:1178.40px;transform:translateX(-50%);margin-left:-1.03px;">1</span>
<span class="t" style="font-size:12.48px;color:#ccccdc;top:1370.00px;letter-spacing:-0.628px;-webkit-text-stroke:0.18px;left:1241.10px;transform:translateX(-50%);margin-left:-0.31px;">1.5</span>
<span class="t" style="font-size:12.48px;color:#ccccdc;top:1370.00px;letter-spacing:0.378px;-webkit-text-stroke:0.18px;left:1303.80px;transform:translateX(-50%);margin-left:0.19px;">2</span>
<span class="t" style="font-size:12.48px;color:#ccccdc;top:1370.00px;letter-spacing:0.184px;-webkit-text-stroke:0.18px;left:1366.50px;transform:translateX(-50%);margin-left:0.09px;">2.5</span>
<span class="t" style="font-size:12.48px;color:#ccccdc;top:1370.00px;letter-spacing:0.472px;-webkit-text-stroke:0.18px;left:1429.20px;transform:translateX(-50%);margin-left:0.24px;">3</span>
<span class="t" style="font-size:12.48px;color:#ccccdc;top:1370.00px;letter-spacing:0.126px;-webkit-text-stroke:0.18px;left:1491.90px;transform:translateX(-50%);margin-left:0.06px;">3.5</span>
<span class="t" style="font-size:12.48px;color:#ccccdc;top:1370.00px;letter-spacing:0.811px;-webkit-text-stroke:0.18px;left:1554.60px;transform:translateX(-50%);margin-left:0.41px;">4</span>
<span class="t" style="font-size:12.48px;color:#ccccdc;top:1370.00px;letter-spacing:0.194px;-webkit-text-stroke:0.18px;left:1617.30px;transform:translateX(-50%);margin-left:0.10px;">4.5</span>
<span class="t" style="font-size:12.48px;color:#ccccdc;top:1370.00px;letter-spacing:0.356px;-webkit-text-stroke:0.18px;left:1680.00px;transform:translateX(-50%);margin-left:0.18px;">5</span>
<span class="t" style="font-size:12.48px;color:#ccccdc;top:1370.00px;letter-spacing:0.069px;-webkit-text-stroke:0.18px;left:1742.70px;transform:translateX(-50%);margin-left:0.03px;">5.5</span>
<span class="t" style="font-size:12.48px;color:#ccccdc;top:1370.00px;letter-spacing:0.502px;-webkit-text-stroke:0.18px;left:1805.40px;transform:translateX(-50%);margin-left:0.25px;">6</span>
<span class="t" style="font-size:12.48px;color:#ccccdc;top:1370.00px;letter-spacing:0.091px;-webkit-text-stroke:0.18px;left:1868.10px;transform:translateX(-50%);margin-left:0.05px;">6.5</span>
<span class="t" style="font-size:12.48px;color:#ccccdc;top:1237.00px;letter-spacing:0.445px;-webkit-text-stroke:0.18px;left:976.10px;">order-core</span>
<span class="t" style="font-size:33.28px;color:#ccccdc;top:1227.00px;left:1477.65px;"><span style="letter-spacing:-0.67px">3</span><span style="letter-spacing:-0.54px">.</span><span style="letter-spacing:-0.26px">3</span><span style="letter-spacing:0.00px">0</span></span>
</body></html>
